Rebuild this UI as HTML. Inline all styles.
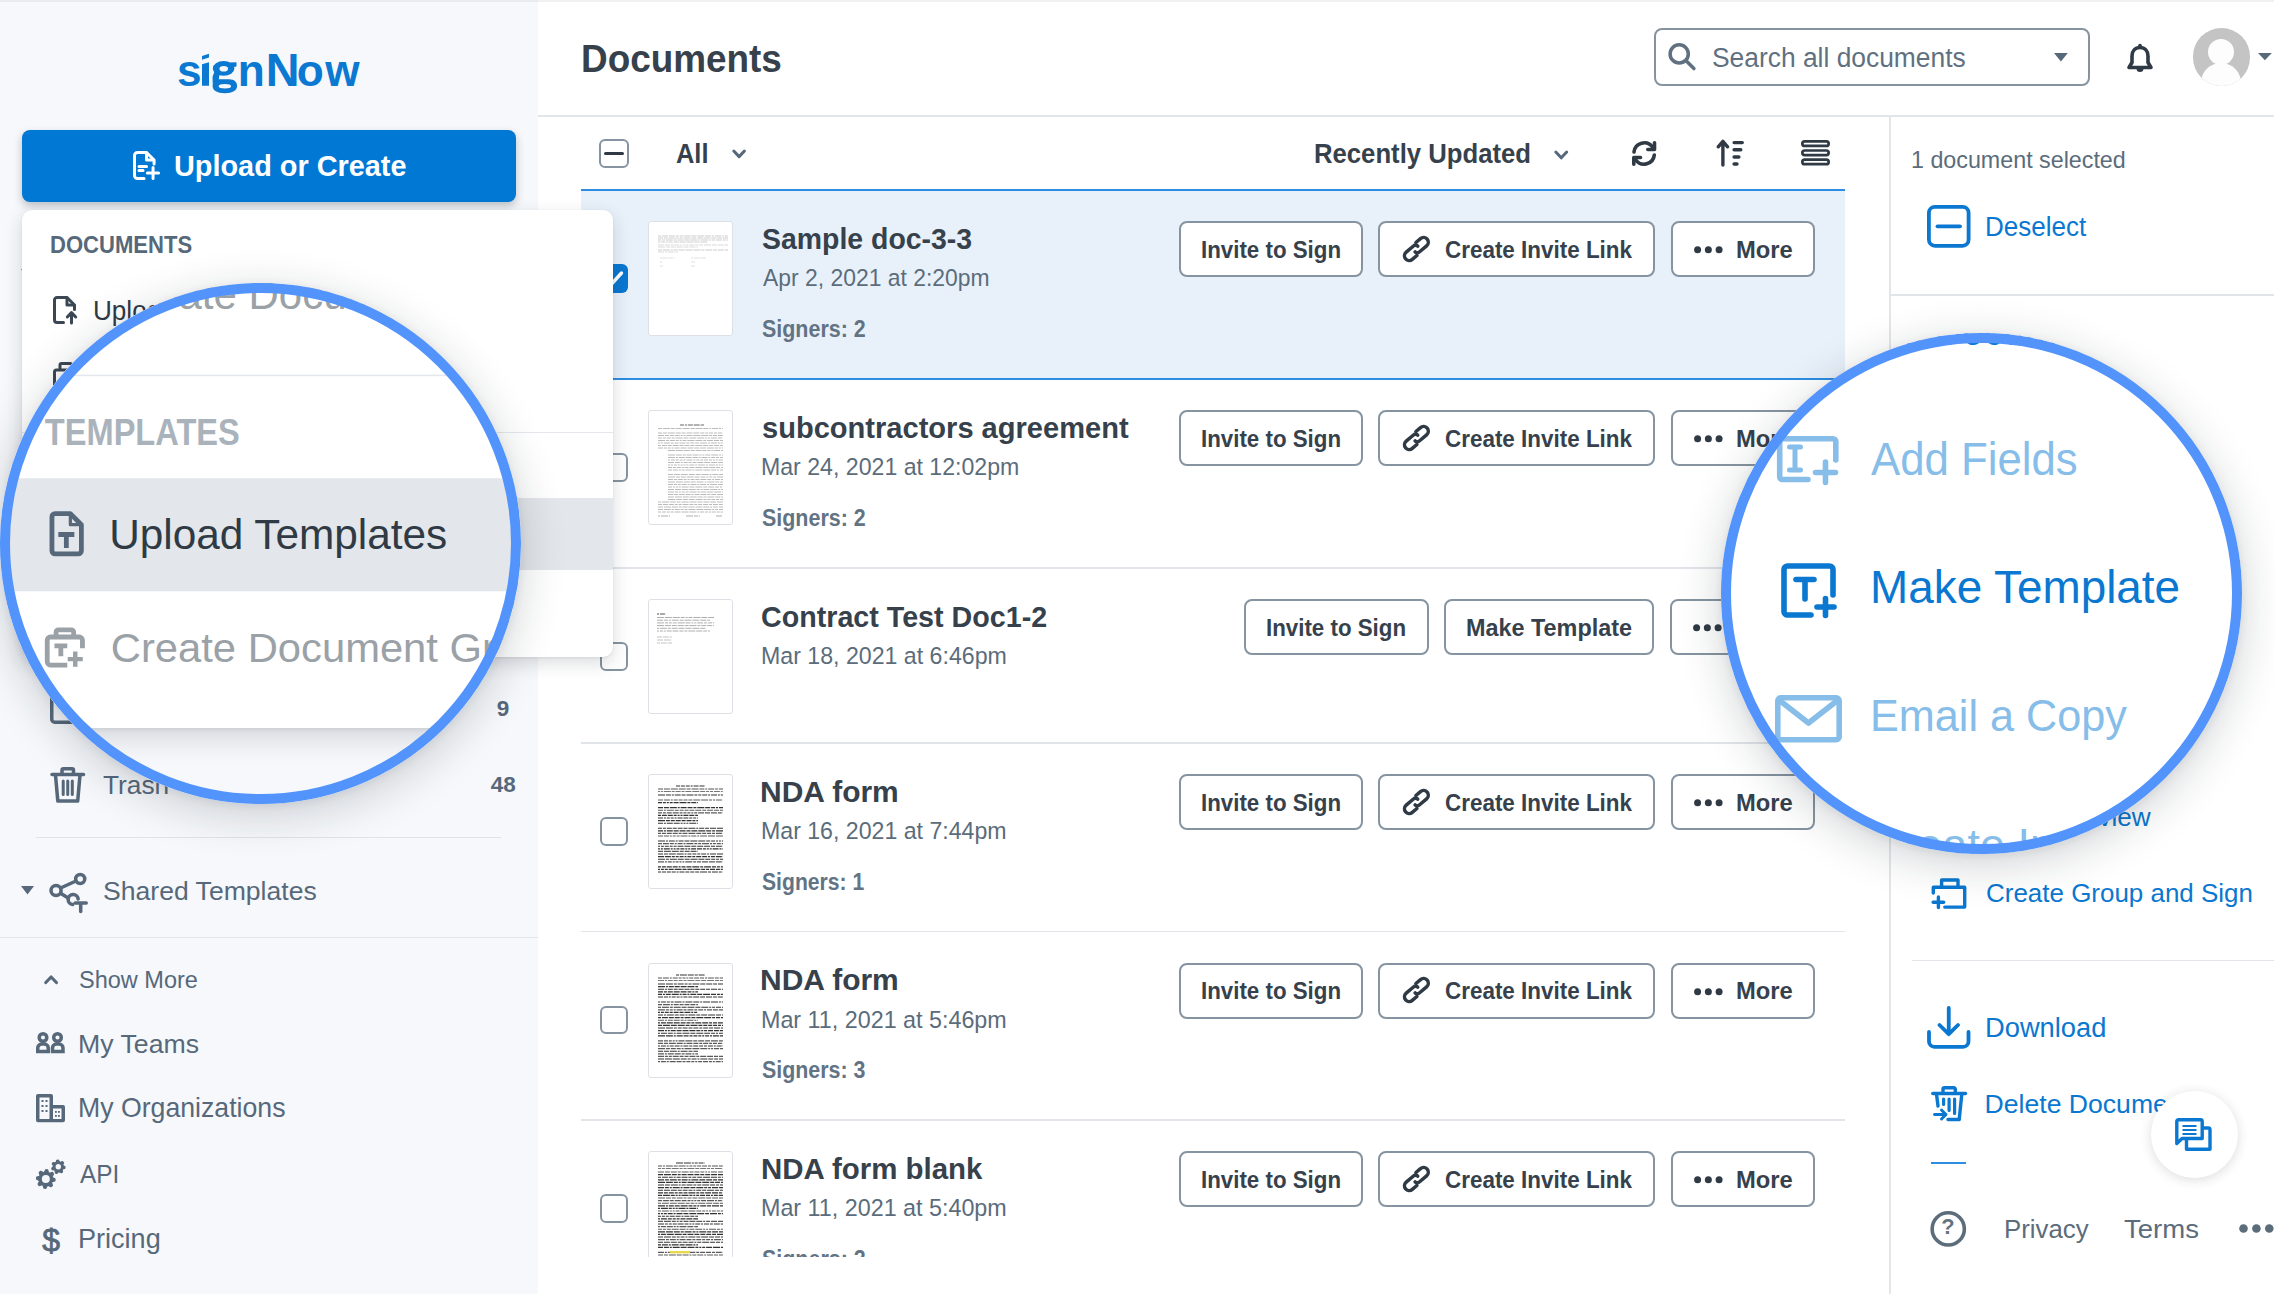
<!DOCTYPE html>
<html><head><meta charset="utf-8"><style>
html,body{margin:0;padding:0;}
body{width:2274px;height:1294px;position:relative;overflow:hidden;background:#fff;font-family:"Liberation Sans",sans-serif;}
.a{position:absolute;}
.t{position:absolute;line-height:0;white-space:nowrap;}
svg.a{display:block;}
</style></head><body>
<div class="a" style="left:0px;top:0px;width:538.00px;height:1294.00px;background:#f6f8fb;"></div><div class="a" style="left:0px;top:0px;width:538.00px;height:1.50px;background:#e9ebee;"></div><div class="a" style="left:538px;top:0px;width:1736.00px;height:1.50px;background:#f1f1f2;"></div><div class="t" style="left:176.90px;top:71.03px;font-size:44.19px;font-weight:700;color:#0b78d1;">s</div><div class="t" style="left:237.80px;top:71.03px;font-size:44.19px;font-weight:700;color:#0b78d1;">n</div><div class="t" style="left:265.80px;top:70.12px;font-size:46.80px;font-weight:700;color:#0b78d1;">N</div><div class="t" style="left:296.65px;top:71.03px;font-size:44.19px;font-weight:700;color:#0b78d1;">o</div><div class="t" style="left:325.25px;top:71.03px;font-size:44.19px;font-weight:700;color:#0b78d1;">w</div><svg class="a" style="left:195px;top:48px;width:50.00px;height:50.00px;overflow:visible;" viewBox="195 48 50 50" preserveAspectRatio="none"><g fill="#0b78d1"><path d="M202 64.2L209 62.2V85.7H202Z"/><path d="M202 56L209 53.8V57.6L202 59.8Z"/><path fill-rule="evenodd" d="M223.6 61.1A10.8 7.35 0 1 1 223.6 75.8A10.8 7.35 0 1 1 223.6 61.1ZM223.75 65.9A4.3 2.8 0 1 0 223.75 71.5A4.3 2.8 0 1 0 223.75 65.9Z"/><path d="M229.5 62.6L236.5 62.2V66.4L231 67.5Z"/><path fill-rule="evenodd" d="M212.6 86.1C212.6 81 215.5 79.2 221 79.2H229C234.5 79.2 237.1 82 237.1 86.1C237.1 90.5 232.5 93.3 224.8 93.3C217 93.3 212.6 90.5 212.6 86.1ZM218.6 86.15C218.6 87.6 221 88.4 224.9 88.4C228.8 88.4 231.1 87.6 231.1 86.15C231.1 84.7 228.8 83.9 224.9 83.9C221 83.9 218.6 84.7 218.6 86.15Z"/><path d="M214.5 71.5L219.5 74.5L218.6 80.5L216 80.8L212.6 83.5V76.5Z"/></g></svg><div class="a" style="left:22px;top:130px;width:493.50px;height:71.80px;background:#0178d3;border-radius:8px;box-shadow:0 4px 8px rgba(40,50,60,.28);"></div><svg class="a" style="left:132.5px;top:150.8px;width:27.10px;height:29.00px;overflow:visible;" viewBox="0 0 27 29" preserveAspectRatio="none"><g fill="none" stroke="#fff" stroke-width="3" stroke-linecap="round" stroke-linejoin="round"><path d="M11 27.5H4.5a3 3 0 0 1-3-3V4.5a3 3 0 0 1 3-3H13.5L21 9V13"/><path d="M13.5 1.8V9H20.5"/><path d="M6 15.5H13.5M6 19.5H10"/><path d="M20 16.5V27.5M14.3 22H25.5"/></g></svg><div class="t" style="left:173.91px;top:166.02px;font-size:29.94px;font-weight:700;color:#fff;transform:scaleX(0.9640);transform-origin:0 0;">Upload or Create</div><svg class="a" style="left:21px;top:269px;width:13.00px;height:8.50px;overflow:visible;" viewBox="0 0 13 8.5" preserveAspectRatio="none"><path d="M0 0H13L6.5 8.5Z" fill="#56687a"/></svg><svg class="a" style="left:50px;top:690px;width:35.00px;height:34.00px;overflow:visible;" viewBox="0 0 35 34" preserveAspectRatio="none"><rect x="1.75" y="1.75" width="31.5" height="30.5" rx="3" fill="none" stroke="#56687a" stroke-width="3.5"/></svg><div class="t" style="left:496.75px;top:708.71px;font-size:22.53px;font-weight:700;color:#56687a;">9</div><svg class="a" style="left:50px;top:766.75px;width:35.50px;height:35.75px;overflow:visible;" viewBox="0 0 35.5 35.75" preserveAspectRatio="none"><g fill="none" stroke="#56687a" stroke-width="3.5" stroke-linecap="round" stroke-linejoin="round"><path d="M2 7.5H33.5"/><path d="M12 7V3.2a1.5 1.5 0 0 1 1.5-1.5H22a1.5 1.5 0 0 1 1.5 1.5V7"/><path d="M5.5 8L7.8 34H27.7L30 8"/><path d="M13.2 14V27.5M17.75 14V27.5M22.3 14V27.5" stroke-width="3"/></g></svg><div class="t" style="left:103.25px;top:784.94px;font-size:26.16px;color:#56687a;transform:scaleX(1.0039);transform-origin:0 0;">Trash</div><div class="t" style="left:490.75px;top:784.96px;font-size:22.53px;font-weight:700;color:#56687a;">48</div><div class="a" style="left:36px;top:836.5px;width:465.00px;height:1.50px;background:#dfe4e8;"></div><svg class="a" style="left:21px;top:885.5px;width:13.00px;height:8.50px;overflow:visible;" viewBox="0 0 13 8.5" preserveAspectRatio="none"><path d="M0 0H13L6.5 8.5Z" fill="#56687a"/></svg><svg class="a" style="left:48.75px;top:873px;width:39.25px;height:39.00px;overflow:visible;" viewBox="0 0 39 39" preserveAspectRatio="none"><g fill="none" stroke="#56687a" stroke-width="3.5" stroke-linecap="round"><circle cx="7" cy="17.5" r="5"/><circle cx="31" cy="6" r="4.5"/><path d="M11.5 15L26.8 8"/><path d="M11.5 20.3L19 25"/><path d="M29 26a5 5 0 1 0-5.5 5.5"/><path d="M26 30H37M31.5 30V38.5"/></g></svg><div class="t" style="left:102.50px;top:891.32px;font-size:26.53px;color:#56687a;transform:scaleX(1.0024);transform-origin:0 0;">Shared Templates</div><div class="a" style="left:0px;top:936.5px;width:538.00px;height:1.50px;background:#e1e5e9;"></div><svg class="a" style="left:43.75px;top:974.75px;width:14.25px;height:9.25px;overflow:visible;" viewBox="0 0 14.25 9.25" preserveAspectRatio="none"><path d="M1.8 7.5L7.1 2L12.4 7.5" fill="none" stroke="#56687a" stroke-width="3.2" stroke-linecap="round" stroke-linejoin="round"/></svg><div class="t" style="left:79.00px;top:979.58px;font-size:23.62px;color:#56687a;transform:scaleX(0.9957);transform-origin:0 0;">Show More</div><svg class="a" style="left:36.25px;top:1032.25px;width:28.75px;height:21.25px;overflow:visible;" viewBox="0 0 28.75 21.25" preserveAspectRatio="none"><g fill="none" stroke="#56687a" stroke-width="3.5"><circle cx="7" cy="5.5" r="3.8"/><circle cx="21.5" cy="5.5" r="3.8"/><path d="M1.75 19.5V16a4 4 0 0 1 4-4h2.5a4 4 0 0 1 4 4v3.5Z"/><path d="M16.5 19.5V16a4 4 0 0 1 4-4h2.5a4 4 0 0 1 4 4v3.5Z"/></g></svg><div class="t" style="left:78.40px;top:1043.95px;font-size:25.44px;color:#56687a;transform:scaleX(1.0488);transform-origin:0 0;">My Teams</div><svg class="a" style="left:36px;top:1094px;width:29.00px;height:28.25px;overflow:visible;" viewBox="0 0 29 28.25" preserveAspectRatio="none"><g fill="#56687a"><path d="M0 2a2 2 0 0 1 2-2H15a2 2 0 0 1 2 2V11H27a2 2 0 0 1 2 2V26.25a2 2 0 0 1-2 2H2a2 2 0 0 1-2-2Z"/></g><g fill="#f6f8fb"><rect x="3.5" y="3.5" width="10" height="21.5"/><rect x="17" y="14.5" width="8.5" height="10.5"/></g><g fill="#56687a"><rect x="5.5" y="6" width="2" height="2"/><rect x="9.5" y="6" width="2" height="2"/><rect x="5.5" y="11" width="2" height="2"/><rect x="9.5" y="11" width="2" height="2"/><rect x="5.5" y="16" width="2" height="2"/><rect x="9.5" y="16" width="2" height="2"/><rect x="19" y="17" width="1.8" height="1.8"/><rect x="22" y="17" width="1.8" height="1.8"/><rect x="19" y="21" width="1.8" height="1.8"/><rect x="22" y="21" width="1.8" height="1.8"/></g></svg><div class="t" style="left:78.30px;top:1108.31px;font-size:27.25px;color:#56687a;transform:scaleX(0.9785);transform-origin:0 0;">My Organizations</div><svg class="a" style="left:36px;top:1159.75px;width:29.00px;height:28.75px;overflow:visible;" viewBox="0 0 29 28.75" preserveAspectRatio="none"><polygon points="19.00,19.00 18.82,20.79 16.09,21.61 15.46,22.78 16.31,25.51 14.91,26.65 12.41,25.29 11.13,25.68 9.80,28.20 8.01,28.02 7.19,25.29 6.02,24.66 3.29,25.51 2.15,24.11 3.51,21.61 3.12,20.33 0.60,19.00 0.78,17.21 3.51,16.39 4.14,15.22 3.29,12.49 4.69,11.35 7.19,12.71 8.47,12.32 9.80,9.80 11.59,9.98 12.41,12.71 13.58,13.34 16.31,12.49 17.45,13.89 16.09,16.39 16.48,17.67" fill="#56687a" stroke="#56687a" stroke-width="1.4" stroke-linejoin="round"/><circle cx="9.8" cy="19" r="4.0" fill="#f6f8fb"/><polygon points="28.90,6.80 28.73,8.27 26.70,8.92 26.12,9.85 26.42,11.96 25.16,12.75 23.39,11.56 22.30,11.68 20.83,13.23 19.44,12.75 19.25,10.62 18.48,9.85 16.35,9.66 15.87,8.27 17.42,6.80 17.54,5.71 16.35,3.94 17.14,2.68 19.25,2.98 20.18,2.40 20.83,0.37 22.30,0.20 23.39,2.04 24.42,2.40 26.42,1.64 27.46,2.68 26.70,4.68 27.06,5.71" fill="#56687a" stroke="#56687a" stroke-width="1.4" stroke-linejoin="round"/><circle cx="22.3" cy="6.8" r="2.7" fill="#f6f8fb"/></svg><div class="t" style="left:80.00px;top:1174.32px;font-size:26.53px;color:#56687a;transform:scaleX(0.9193);transform-origin:0 0;">API</div><div class="t" style="left:42.25px;top:1239.91px;font-size:31.98px;color:#56687a;-webkit-text-stroke:0.8px #56687a;">$</div><div class="t" style="left:77.80px;top:1239.43px;font-size:27.62px;color:#56687a;transform:scaleX(0.9800);transform-origin:0 0;">Pricing</div><div class="t" style="left:580.71px;top:58.82px;font-size:38.52px;font-weight:700;color:#36414c;transform:scaleX(0.9577);transform-origin:0 0;">Documents</div><div class="a" style="left:1654px;top:28.3px;width:435.50px;height:57.50px;background:#fff;border:2px solid #8594a0;border-radius:8px;box-sizing:border-box;"></div><svg class="a" style="left:1667.8px;top:44.8px;width:27.80px;height:25.70px;overflow:visible;" viewBox="0 0 27.8 25.7" preserveAspectRatio="none"><g fill="none" stroke="#5f7180" stroke-width="3.5" stroke-linecap="round"><circle cx="11.2" cy="8.9" r="9.1"/><path d="M17.9 15.6L25.9 23.6"/></g></svg><div class="t" style="left:1712.44px;top:56.68px;font-size:28.34px;color:#5f7180;transform:scaleX(0.9314);transform-origin:0 0;">Search all documents</div><svg class="a" style="left:2053.7px;top:53px;width:13.80px;height:8.40px;overflow:visible;" viewBox="0 0 13.8 8.4" preserveAspectRatio="none"><path d="M0 0H13.8L6.9 8.4Z" fill="#56687a"/></svg><svg class="a" style="left:2126.8px;top:43px;width:26.00px;height:29.00px;overflow:visible;" viewBox="0 0 26 29" preserveAspectRatio="none"><g fill="none" stroke="#2f3a45" stroke-width="3.6" stroke-linejoin="round"><path d="M13 4.5C8 4.5 5 8 5 13V19.5L2 24.5H24L21 19.5V13C21 8 18 4.5 13 4.5Z"/></g><path d="M9.5 25.5a3.5 3.5 0 0 0 7 0Z" fill="#2f3a45"/><circle cx="13" cy="2.6" r="1.9" fill="#2f3a45"/></svg><div class="a" style="left:2192.6px;top:28.3px;width:57.4px;height:57.4px;border-radius:50%;background:#c4c4c4;overflow:hidden"><div class="a" style="left:15.7px;top:10.5px;width:26px;height:26px;border-radius:50%;background:#fdfdfd"></div><div class="a" style="left:8.5px;top:35px;width:40px;height:40px;border-radius:50%;background:#fdfdfd"></div></div><svg class="a" style="left:2258px;top:53.3px;width:13.80px;height:7.30px;overflow:visible;" viewBox="0 0 13.8 7.3" preserveAspectRatio="none"><path d="M0 0H13.8L6.9 7.3Z" fill="#56687a"/></svg><div class="a" style="left:538px;top:115px;width:1736.00px;height:2.00px;background:#e3e6e9;"></div><div class="a" style="left:599.25px;top:139.25px;width:29.25px;height:28.50px;background:#fff;border:2px solid #8594a0;border-radius:6px;box-sizing:border-box;"></div><div class="a" style="left:604px;top:152px;width:19.50px;height:3.20px;background:#2f3a45;border-radius:2px;"></div><div class="t" style="left:676.07px;top:153.56px;font-size:27.98px;font-weight:700;color:#36414c;transform:scaleX(0.9091);transform-origin:0 0;">All</div><svg class="a" style="left:731.75px;top:149.25px;width:14.25px;height:9.75px;overflow:visible;" viewBox="0 0 14.25 9.75" preserveAspectRatio="none"><path d="M1.8 2L7.1 7.6L12.4 2" fill="none" stroke="#56687a" stroke-width="3" stroke-linecap="round" stroke-linejoin="round"/></svg><div class="t" style="left:1314.35px;top:153.81px;font-size:27.25px;font-weight:700;color:#36414c;transform:scaleX(0.9427);transform-origin:0 0;">Recently Updated</div><svg class="a" style="left:1554px;top:149.75px;width:14.50px;height:10.00px;overflow:visible;" viewBox="0 0 14.5 10" preserveAspectRatio="none"><path d="M1.8 2L7.25 7.8L12.7 2" fill="none" stroke="#56687a" stroke-width="3" stroke-linecap="round" stroke-linejoin="round"/></svg><svg class="a" style="left:1630.5px;top:141px;width:26.25px;height:25.00px;overflow:visible;" viewBox="0 0 26.25 25" preserveAspectRatio="none"><g fill="none" stroke="#2f3a45" stroke-width="3.6" stroke-linecap="round" stroke-linejoin="round"><path d="M3 11A10.3 10.3 0 0 1 21.5 6"/><path d="M23.3 14A10.3 10.3 0 0 1 4.8 19"/><path d="M23.5 1.8V8.5H16.8"/><path d="M2.8 23.2V16.5H9.5"/></g></svg><svg class="a" style="left:1715.8px;top:139px;width:28.20px;height:27.70px;overflow:visible;" viewBox="0 0 28.2 27.7" preserveAspectRatio="none"><g fill="none" stroke="#2f3a45" stroke-width="3.4" stroke-linecap="round" stroke-linejoin="round"><path d="M6.9 26V2.5M2.2 7.8L6.9 2.4L11.6 7.8"/><path d="M18.1 3.6H26.3M18.1 10.8H24.8M18.1 18H22.9M18.1 25H21"/></g></svg><svg class="a" style="left:1801px;top:140.4px;width:29.00px;height:25.80px;overflow:visible;" viewBox="0 0 29 25.8" preserveAspectRatio="none"><g fill="none" stroke="#2f3a45" stroke-width="2.7"><rect x="1.35" y="1.35" width="26.3" height="4.6" rx="2.3"/><rect x="1.35" y="10.5" width="26.3" height="4.6" rx="2.3"/><rect x="1.35" y="19.6" width="26.3" height="4.6" rx="2.3"/></g></svg><div class="a" style="left:1888.5px;top:117px;width:2.00px;height:1177.00px;background:#e3e6e9;"></div><div class="a" style="left:0;top:0;width:2274px;height:1257px;overflow:hidden"><div class="a" style="left:581px;top:189px;width:1264.00px;height:191.00px;background:#e8f1fa;"></div><div class="a" style="left:581px;top:189px;width:1264.00px;height:2.00px;background:#2d8de2;"></div><div class="a" style="left:581px;top:378px;width:1264.00px;height:2.00px;background:#2d8de2;"></div><div class="a" style="left:599.5px;top:264px;width:28.50px;height:28.50px;background:#0a77d0;border-radius:6px;"></div><svg class="a" style="left:599.5px;top:264px;width:28.50px;height:28.50px;overflow:visible;" viewBox="0 0 28.5 28.5" preserveAspectRatio="none"><path d="M7 14.5L12 19.5L21.5 9" fill="none" stroke="#fff" stroke-width="3.4" stroke-linecap="round" stroke-linejoin="round"/></svg><div class="a" style="left:647.5px;top:221px;width:85.50px;height:115.00px;background:#fff;border:1px solid #dde1e5;border-radius:3px;box-sizing:border-box;"></div><svg class="a" style="left:647.5px;top:221px;width:85.50px;height:115.00px;overflow:visible;" viewBox="0 0 85.5 115" preserveAspectRatio="none"><path d="M10 15.0H80" stroke="#8a8a8a" stroke-width="0.6" stroke-dasharray="3 0.9 6 0.9 6 0.9 3 0.9 4 0.9 6 0.9 5 0.9 7 0.9 6 0.9 2 0.9 6 0.9 2 0.9" opacity="0.7"/><path d="M10 17.0H80" stroke="#8a8a8a" stroke-width="0.6" stroke-dasharray="5 0.9 4 0.9 6 0.9 3 0.9 3 0.9 7 0.9 5 0.9 6 0.9 6 0.9 5 0.9 5 0.9 7 0.9" opacity="0.7"/><path d="M10 19.0H80" stroke="#8a8a8a" stroke-width="0.6" stroke-dasharray="3 0.9 3 0.9 7 0.9 3 0.9 6 0.9 5 0.9 7 0.9 2 0.9 7 0.9 2 0.9 3 0.9 6 0.9" opacity="0.7"/><path d="M10 21.0H60" stroke="#8a8a8a" stroke-width="0.6" stroke-dasharray="2 0.9 4 0.9 2 0.9 4 0.9 5 0.9 6 0.9 7 0.9 5 0.9 7 0.9 5 0.9 5 0.9 7 0.9" opacity="0.7"/><path d="M10 24.0H80" stroke="#999" stroke-width="0.6" stroke-dasharray="6 0.9 5 0.9 3 0.9 4 0.9 2 0.9 2 0.9 3 0.9 5 0.9 3 0.9 4 0.9 7 0.9 5 0.9" opacity="0.6"/><path d="M10 26.0H50" stroke="#999" stroke-width="0.6" stroke-dasharray="7 0.9 4 0.9 5 0.9 6 0.9 5 0.9 6 0.9 4 0.9 6 0.9 6 0.9 5 0.9 6 0.9 3 0.9" opacity="0.6"/><path d="M10 29.0H80" stroke="#888" stroke-width="0.6" stroke-dasharray="4 0.9 7 0.9 2 0.9 4 0.9 6 0.9 7 0.9 7 0.9 3 0.9 7 0.9 4 0.9 6 0.9 6 0.9" opacity="0.7"/><path d="M10 31.0H30" stroke="#999" stroke-width="0.6" stroke-dasharray="6 0.9 2 0.9 7 0.9 7 0.9 3 0.9 7 0.9 6 0.9 4 0.9 4 0.9 2 0.9 2 0.9 5 0.9" opacity="0.6"/><path d="M12 37.0H27" stroke="#aaa" stroke-width="0.6" stroke-dasharray="7 0.9 5 0.9 2 0.9 4 0.9 2 0.9 5 0.9 3 0.9 2 0.9 4 0.9 5 0.9 5 0.9 2 0.9" opacity="0.6"/><path d="M43 37.0H58" stroke="#aaa" stroke-width="0.6" stroke-dasharray="2 0.9 6 0.9 6 0.9 2 0.9 5 0.9 7 0.9 6 0.9 4 0.9 6 0.9 4 0.9 6 0.9 3 0.9" opacity="0.6"/><path d="M12 41.0H15" stroke="#aaa" stroke-width="0.6" stroke-dasharray="2 0.9 4 0.9 2 0.9 2 0.9 2 0.9 6 0.9 6 0.9 2 0.9 3 0.9 5 0.9 4 0.9 6 0.9" opacity="0.6"/><path d="M43 41.0H47" stroke="#aaa" stroke-width="0.6" stroke-dasharray="4 0.9 3 0.9 7 0.9 2 0.9 4 0.9 4 0.9 4 0.9 3 0.9 5 0.9 5 0.9 5 0.9 6 0.9" opacity="0.6"/><path d="M12 45.0H15" stroke="#aaa" stroke-width="0.6" stroke-dasharray="5 0.9 7 0.9 6 0.9 7 0.9 6 0.9 2 0.9 6 0.9 6 0.9 4 0.9 5 0.9 7 0.9 7 0.9" opacity="0.6"/><path d="M43 45.0H47" stroke="#aaa" stroke-width="0.6" stroke-dasharray="7 0.9 3 0.9 4 0.9 5 0.9 4 0.9 6 0.9 4 0.9 6 0.9 4 0.9 2 0.9 5 0.9 6 0.9" opacity="0.6"/></svg><div class="t" style="left:761.78px;top:238.67px;font-size:29.80px;font-weight:700;color:#36414c;transform:scaleX(0.9541);transform-origin:0 0;">Sample doc-3-3</div><div class="t" style="left:762.50px;top:278.15px;font-size:24.71px;color:#5b6c7b;transform:scaleX(0.9270);transform-origin:0 0;">Apr 2, 2021 at 2:20pm</div><div class="t" style="left:761.84px;top:328.58px;font-size:24.35px;font-weight:700;color:#627384;transform:scaleX(0.8810);transform-origin:0 0;">Signers: 2</div><div class="a" style="left:1178.5px;top:221px;width:184.50px;height:56.25px;background:#fff;border:2px solid #8594a0;border-radius:8px;box-sizing:border-box;"></div><div class="t" style="left:1200.88px;top:249.83px;font-size:24.35px;font-weight:700;color:#36414c;transform:scaleX(0.9162);transform-origin:0 0;">Invite to Sign</div><div class="a" style="left:1378px;top:221px;width:276.75px;height:56.25px;background:#fff;border:2px solid #8594a0;border-radius:8px;box-sizing:border-box;"></div><svg class="a" style="left:1401.5px;top:235.5px;width:28.75px;height:26.75px;overflow:visible;" viewBox="0 0 28.75 26.75" preserveAspectRatio="none"><g fill="none" stroke="#2f3a45" stroke-width="3.5" stroke-linecap="round"><g transform="translate(14.4 13) rotate(-40)"><path d="M3.8 -5.3H9.8A4.75 4.75 0 0 1 9.8 4.2H0.3Q-2.8 4.2 -2.8 1.3"/><path d="M-3.8 5.3H-9.8A4.75 4.75 0 0 1 -9.8 -4.2H-0.3Q2.8 -4.2 2.8 -1.3"/></g></g></svg><div class="t" style="left:1444.58px;top:249.83px;font-size:24.35px;font-weight:700;color:#36414c;transform:scaleX(0.9217);transform-origin:0 0;">Create Invite Link</div><div class="a" style="left:1671px;top:221px;width:144.00px;height:56.25px;background:#fff;border:2px solid #8594a0;border-radius:8px;box-sizing:border-box;"></div><svg class="a" style="left:1693.5px;top:246px;width:28.70px;height:7.50px;overflow:visible;" viewBox="0 0 28.7 7.5" preserveAspectRatio="none"><g fill="#2f3a45"><circle cx="3.6" cy="3.7" r="3.5"/><circle cx="14.35" cy="3.7" r="3.5"/><circle cx="25.1" cy="3.7" r="3.5"/></g></svg><div class="t" style="left:1735.84px;top:249.83px;font-size:24.35px;font-weight:700;color:#36414c;transform:scaleX(0.9758);transform-origin:0 0;">More</div><div class="a" style="left:581px;top:567.25px;width:1264.00px;height:1.50px;background:#e1e5e9;"></div><div class="a" style="left:599.5px;top:453px;width:28.50px;height:28.50px;background:#fff;border:2px solid #8594a0;border-radius:6px;box-sizing:border-box;"></div><div class="a" style="left:647.5px;top:410px;width:85.50px;height:115.00px;background:#fff;border:1px solid #dde1e5;border-radius:3px;box-sizing:border-box;"></div><svg class="a" style="left:647.5px;top:410px;width:85.50px;height:115.00px;overflow:visible;" viewBox="0 0 85.5 115" preserveAspectRatio="none"><path d="M32 15.0H56" stroke="#666" stroke-width="1.0" stroke-dasharray="4 0.9 2 0.9 5 0.9 6 0.9 6 0.9 7 0.9 3 0.9 2 0.9 7 0.9 7 0.9 4 0.9 5 0.9" opacity="1.0"/><path d="M10 18.5H75" stroke="#8d8d8d" stroke-width="0.75" stroke-dasharray="4 0.9 7 0.9 4 0.9 6 0.9 7 0.9 4 0.9 7 0.9 5 0.9 2 0.9 6 0.9 2 0.9 7 0.9" opacity="0.8"/><path d="M10 23.0H75" stroke="#8d8d8d" stroke-width="0.75" stroke-dasharray="4 0.9 4 0.9 7 0.9 5 0.9 4 0.9 6 0.9 6 0.9 4 0.9 3 0.9 4 0.9 3 0.9 4 0.9" opacity="0.8"/><path d="M10 25.5H75" stroke="#8d8d8d" stroke-width="0.75" stroke-dasharray="6 0.9 4 0.9 4 0.9 5 0.9 2 0.9 2 0.9 6 0.9 7 0.9 7 0.9 3 0.9 4 0.9 6 0.9" opacity="0.8"/><path d="M10 28.0H75" stroke="#8d8d8d" stroke-width="0.75" stroke-dasharray="4 0.9 3 0.9 4 0.9 3 0.9 7 0.9 5 0.9 7 0.9 7 0.9 2 0.9 2 0.9 6 0.9 4 0.9" opacity="0.8"/><path d="M10 30.5H75" stroke="#8d8d8d" stroke-width="0.75" stroke-dasharray="7 0.9 3 0.9 5 0.9 3 0.9 2 0.9 4 0.9 7 0.9 7 0.9 3 0.9 6 0.9 5 0.9 4 0.9" opacity="0.8"/><path d="M10 33.0H75" stroke="#8d8d8d" stroke-width="0.75" stroke-dasharray="2 0.9 2 0.9 6 0.9 3 0.9 4 0.9 6 0.9 3 0.9 4 0.9 4 0.9 7 0.9 2 0.9 6 0.9" opacity="0.8"/><path d="M10 35.5H75" stroke="#8d8d8d" stroke-width="0.75" stroke-dasharray="3 0.9 5 0.9 4 0.9 6 0.9 4 0.9 5 0.9 4 0.9 7 0.9 5 0.9 4 0.9 5 0.9 6 0.9" opacity="0.8"/><path d="M10 38.0H75" stroke="#8d8d8d" stroke-width="0.75" stroke-dasharray="5 0.9 3 0.9 3 0.9 2 0.9 5 0.9 6 0.9 6 0.9 5 0.9 6 0.9 7 0.9 3 0.9 2 0.9" opacity="0.8"/><path d="M20 40.5H75" stroke="#8d8d8d" stroke-width="0.75" stroke-dasharray="7 0.9 7 0.9 6 0.9 4 0.9 6 0.9 4 0.9 3 0.9 2 0.9 6 0.9 4 0.9 2 0.9 3 0.9" opacity="0.8"/><path d="M20 45.0H75" stroke="#8d8d8d" stroke-width="0.75" stroke-dasharray="7 0.9 6 0.9 3 0.9 5 0.9 6 0.9 2 0.9 2 0.9 5 0.9 7 0.9 2 0.9 3 0.9 6 0.9" opacity="0.8"/><path d="M20 47.5H75" stroke="#8d8d8d" stroke-width="0.75" stroke-dasharray="7 0.9 2 0.9 6 0.9 6 0.9 5 0.9 2 0.9 6 0.9 2 0.9 4 0.9 3 0.9 4 0.9 6 0.9" opacity="0.8"/><path d="M20 50.0H75" stroke="#8d8d8d" stroke-width="0.75" stroke-dasharray="2 0.9 4 0.9 3 0.9 3 0.9 2 0.9 6 0.9 2 0.9 3 0.9 3 0.9 4 0.9 3 0.9 2 0.9" opacity="0.8"/><path d="M20 52.5H75" stroke="#8d8d8d" stroke-width="0.75" stroke-dasharray="6 0.9 5 0.9 2 0.9 4 0.9 3 0.9 4 0.9 6 0.9 6 0.9 6 0.9 5 0.9 2 0.9 5 0.9" opacity="0.8"/><path d="M20 55.0H75" stroke="#8d8d8d" stroke-width="0.75" stroke-dasharray="2 0.9 2 0.9 3 0.9 2 0.9 2 0.9 2 0.9 2 0.9 5 0.9 2 0.9 7 0.9 2 0.9 6 0.9" opacity="0.8"/><path d="M20 57.5H75" stroke="#8d8d8d" stroke-width="0.75" stroke-dasharray="4 0.9 3 0.9 4 0.9 2 0.9 4 0.9 5 0.9 7 0.9 5 0.9 6 0.9 4 0.9 4 0.9 4 0.9" opacity="0.8"/><path d="M20 60.0H75" stroke="#8d8d8d" stroke-width="0.75" stroke-dasharray="4 0.9 5 0.9 2 0.9 3 0.9 6 0.9 2 0.9 7 0.9 7 0.9 5 0.9 2 0.9 6 0.9 3 0.9" opacity="0.8"/><path d="M20 64.5H75" stroke="#8d8d8d" stroke-width="0.75" stroke-dasharray="5 0.9 6 0.9 7 0.9 6 0.9 5 0.9 7 0.9 2 0.9 6 0.9 5 0.9 2 0.9 4 0.9 7 0.9" opacity="0.8"/><path d="M20 67.0H75" stroke="#8d8d8d" stroke-width="0.75" stroke-dasharray="7 0.9 4 0.9 5 0.9 7 0.9 5 0.9 5 0.9 2 0.9 3 0.9 3 0.9 6 0.9 4 0.9 7 0.9" opacity="0.8"/><path d="M20 69.5H75" stroke="#8d8d8d" stroke-width="0.75" stroke-dasharray="5 0.9 3 0.9 5 0.9 3 0.9 2 0.9 4 0.9 4 0.9 6 0.9 4 0.9 2 0.9 5 0.9 7 0.9" opacity="0.8"/><path d="M20 72.0H75" stroke="#8d8d8d" stroke-width="0.75" stroke-dasharray="7 0.9 7 0.9 6 0.9 5 0.9 7 0.9 2 0.9 7 0.9 4 0.9 6 0.9 6 0.9 2 0.9 6 0.9" opacity="0.8"/><path d="M20 74.5H75" stroke="#8d8d8d" stroke-width="0.75" stroke-dasharray="5 0.9 3 0.9 3 0.9 5 0.9 2 0.9 6 0.9 2 0.9 6 0.9 2 0.9 7 0.9 5 0.9 3 0.9" opacity="0.8"/><path d="M20 77.0H75" stroke="#8d8d8d" stroke-width="0.75" stroke-dasharray="4 0.9 2 0.9 2 0.9 2 0.9 7 0.9 5 0.9 7 0.9 4 0.9 6 0.9 4 0.9 2 0.9 2 0.9" opacity="0.8"/><path d="M20 79.5H75" stroke="#8d8d8d" stroke-width="0.75" stroke-dasharray="6 0.9 6 0.9 6 0.9 7 0.9 3 0.9 2 0.9 6 0.9 7 0.9 2 0.9 6 0.9 2 0.9 6 0.9" opacity="0.8"/><path d="M20 82.0H75" stroke="#8d8d8d" stroke-width="0.75" stroke-dasharray="6 0.9 3 0.9 2 0.9 3 0.9 3 0.9 7 0.9 3 0.9 5 0.9 6 0.9 7 0.9 5 0.9 4 0.9" opacity="0.8"/><path d="M20 84.5H75" stroke="#8d8d8d" stroke-width="0.75" stroke-dasharray="5 0.9 4 0.9 6 0.9 5 0.9 2 0.9 5 0.9 6 0.9 3 0.9 5 0.9 7 0.9 3 0.9 5 0.9" opacity="0.8"/><path d="M20 87.0H75" stroke="#8d8d8d" stroke-width="0.75" stroke-dasharray="6 0.9 7 0.9 6 0.9 7 0.9 5 0.9 3 0.9 7 0.9 5 0.9 3 0.9 3 0.9 2 0.9 5 0.9" opacity="0.8"/><path d="M20 89.5H75" stroke="#8d8d8d" stroke-width="0.75" stroke-dasharray="7 0.9 6 0.9 5 0.9 6 0.9 7 0.9 3 0.9 3 0.9 4 0.9 3 0.9 3 0.9 6 0.9 6 0.9" opacity="0.8"/><path d="M10 92.0H75" stroke="#8d8d8d" stroke-width="0.75" stroke-dasharray="3 0.9 7 0.9 6 0.9 4 0.9 7 0.9 7 0.9 5 0.9 6 0.9 6 0.9 6 0.9 4 0.9 3 0.9" opacity="0.8"/><path d="M10 94.5H75" stroke="#8d8d8d" stroke-width="0.75" stroke-dasharray="4 0.9 5 0.9 5 0.9 3 0.9 3 0.9 6 0.9 4 0.9 3 0.9 4 0.9 5 0.9 3 0.9 5 0.9" opacity="0.8"/><path d="M10 97.0H75" stroke="#8d8d8d" stroke-width="0.75" stroke-dasharray="5 0.9 7 0.9 6 0.9 3 0.9 5 0.9 6 0.9 7 0.9 6 0.9 2 0.9 5 0.9 7 0.9 2 0.9" opacity="0.8"/><path d="M10 99.5H75" stroke="#8d8d8d" stroke-width="0.75" stroke-dasharray="5 0.9 7 0.9 2 0.9 5 0.9 3 0.9 3 0.9 7 0.9 7 0.9 7 0.9 2 0.9 3 0.9 4 0.9" opacity="0.8"/><path d="M10 102.0H75" stroke="#8d8d8d" stroke-width="0.75" stroke-dasharray="3 0.9 4 0.9 3 0.9 3 0.9 6 0.9 7 0.9 7 0.9 2 0.9 4 0.9 3 0.9 2 0.9 4 0.9" opacity="0.8"/><path d="M10 106.0H22" stroke="#999" stroke-width="0.8" stroke-dasharray="2 0.9 7 0.9 2 0.9 2 0.9 2 0.9 4 0.9 4 0.9 2 0.9 4 0.9 5 0.9 6 0.9 7 0.9" opacity="1.0"/><path d="M38 106.0H52" stroke="#999" stroke-width="0.8" stroke-dasharray="7 0.9 4 0.9 2 0.9 2 0.9 4 0.9 4 0.9 5 0.9 5 0.9 5 0.9 2 0.9 3 0.9 7 0.9" opacity="1.0"/><path d="M68 106.0H74" stroke="#999" stroke-width="0.8" stroke-dasharray="6 0.9 7 0.9 5 0.9 5 0.9 3 0.9 6 0.9 4 0.9 2 0.9 4 0.9 2 0.9 7 0.9 5 0.9" opacity="1.0"/></svg><div class="t" style="left:761.52px;top:427.67px;font-size:29.80px;font-weight:700;color:#36414c;transform:scaleX(0.9753);transform-origin:0 0;">subcontractors agreement</div><div class="t" style="left:760.63px;top:467.15px;font-size:24.71px;color:#5b6c7b;transform:scaleX(0.9359);transform-origin:0 0;">Mar 24, 2021 at 12:02pm</div><div class="t" style="left:761.84px;top:517.58px;font-size:24.35px;font-weight:700;color:#627384;transform:scaleX(0.8810);transform-origin:0 0;">Signers: 2</div><div class="a" style="left:1178.5px;top:410px;width:184.50px;height:56.25px;background:#fff;border:2px solid #8594a0;border-radius:8px;box-sizing:border-box;"></div><div class="t" style="left:1200.88px;top:438.83px;font-size:24.35px;font-weight:700;color:#36414c;transform:scaleX(0.9162);transform-origin:0 0;">Invite to Sign</div><div class="a" style="left:1378px;top:410px;width:276.75px;height:56.25px;background:#fff;border:2px solid #8594a0;border-radius:8px;box-sizing:border-box;"></div><svg class="a" style="left:1401.5px;top:424.5px;width:28.75px;height:26.75px;overflow:visible;" viewBox="0 0 28.75 26.75" preserveAspectRatio="none"><g fill="none" stroke="#2f3a45" stroke-width="3.5" stroke-linecap="round"><g transform="translate(14.4 13) rotate(-40)"><path d="M3.8 -5.3H9.8A4.75 4.75 0 0 1 9.8 4.2H0.3Q-2.8 4.2 -2.8 1.3"/><path d="M-3.8 5.3H-9.8A4.75 4.75 0 0 1 -9.8 -4.2H-0.3Q2.8 -4.2 2.8 -1.3"/></g></g></svg><div class="t" style="left:1444.58px;top:438.83px;font-size:24.35px;font-weight:700;color:#36414c;transform:scaleX(0.9217);transform-origin:0 0;">Create Invite Link</div><div class="a" style="left:1671px;top:410px;width:144.00px;height:56.25px;background:#fff;border:2px solid #8594a0;border-radius:8px;box-sizing:border-box;"></div><svg class="a" style="left:1693.5px;top:435px;width:28.70px;height:7.50px;overflow:visible;" viewBox="0 0 28.7 7.5" preserveAspectRatio="none"><g fill="#2f3a45"><circle cx="3.6" cy="3.7" r="3.5"/><circle cx="14.35" cy="3.7" r="3.5"/><circle cx="25.1" cy="3.7" r="3.5"/></g></svg><div class="t" style="left:1735.84px;top:438.83px;font-size:24.35px;font-weight:700;color:#36414c;transform:scaleX(0.9758);transform-origin:0 0;">More</div><div class="a" style="left:581px;top:742.25px;width:1264.00px;height:1.50px;background:#e1e5e9;"></div><div class="a" style="left:599.5px;top:642px;width:28.50px;height:28.50px;background:#fff;border:2px solid #8594a0;border-radius:6px;box-sizing:border-box;"></div><div class="a" style="left:647.5px;top:599px;width:85.50px;height:115.00px;background:#fff;border:1px solid #dde1e5;border-radius:3px;box-sizing:border-box;"></div><svg class="a" style="left:647.5px;top:599px;width:85.50px;height:115.00px;overflow:visible;" viewBox="0 0 85.5 115" preserveAspectRatio="none"><path d="M9 15.0H18" stroke="#555" stroke-width="1.1" stroke-dasharray="2 0.9 5 0.9 6 0.9 4 0.9 2 0.9 6 0.9 7 0.9 4 0.9 7 0.9 4 0.9 5 0.9 4 0.9" opacity="1.0"/><path d="M9 18.5H66" stroke="#999" stroke-width="0.8" stroke-dasharray="7 0.9 7 0.9 7 0.9 4 0.9 2 0.9 4 0.9 7 0.9 6 0.9 6 0.9 6 0.9 2 0.9 7 0.9" opacity="1.0"/><path d="M9 21.2H62" stroke="#999" stroke-width="0.8" stroke-dasharray="6 0.9 4 0.9 2 0.9 7 0.9 4 0.9 7 0.9 7 0.9 6 0.9 7 0.9 3 0.9 7 0.9 7 0.9" opacity="1.0"/><path d="M9 23.9H66" stroke="#999" stroke-width="0.8" stroke-dasharray="7 0.9 3 0.9 3 0.9 4 0.9 7 0.9 5 0.9 2 0.9 2 0.9 6 0.9 3 0.9 4 0.9 7 0.9" opacity="1.0"/><path d="M9 26.6H66" stroke="#999" stroke-width="0.8" stroke-dasharray="7 0.9 6 0.9 5 0.9 6 0.9 4 0.9 7 0.9 3 0.9 5 0.9 5 0.9 4 0.9 3 0.9 7 0.9" opacity="1.0"/><path d="M9 29.3H58" stroke="#999" stroke-width="0.8" stroke-dasharray="2 0.9 7 0.9 3 0.9 6 0.9 6 0.9 6 0.9 7 0.9 5 0.9 4 0.9 2 0.9 4 0.9 4 0.9" opacity="1.0"/><path d="M9 32.0H62" stroke="#999" stroke-width="0.8" stroke-dasharray="2 0.9 3 0.9 2 0.9 5 0.9 6 0.9 4 0.9 3 0.9 7 0.9 6 0.9 4 0.9 4 0.9 5 0.9" opacity="1.0"/><path d="M9 38.0H24" stroke="#aaa" stroke-width="0.7" stroke-dasharray="5 0.9 6 0.9 2 0.9 4 0.9 5 0.9 2 0.9 3 0.9 4 0.9 6 0.9 2 0.9 7 0.9 2 0.9" opacity="1.0"/><path d="M9 41.0H24" stroke="#aaa" stroke-width="0.7" stroke-dasharray="6 0.9 7 0.9 2 0.9 3 0.9 7 0.9 3 0.9 6 0.9 5 0.9 7 0.9 7 0.9 5 0.9 7 0.9" opacity="1.0"/><path d="M9 44.0H24" stroke="#aaa" stroke-width="0.7" stroke-dasharray="3 0.9 6 0.9 6 0.9 3 0.9 5 0.9 3 0.9 6 0.9 6 0.9 3 0.9 6 0.9 3 0.9 3 0.9" opacity="1.0"/></svg><div class="t" style="left:761.30px;top:616.67px;font-size:29.80px;font-weight:700;color:#36414c;transform:scaleX(0.9618);transform-origin:0 0;">Contract Test Doc1-2</div><div class="t" style="left:760.63px;top:656.15px;font-size:24.71px;color:#5b6c7b;transform:scaleX(0.9373);transform-origin:0 0;">Mar 18, 2021 at 6:46pm</div><div class="a" style="left:1244px;top:599px;width:184.50px;height:56.25px;background:#fff;border:2px solid #8594a0;border-radius:8px;box-sizing:border-box;"></div><div class="t" style="left:1266.38px;top:627.83px;font-size:24.35px;font-weight:700;color:#36414c;transform:scaleX(0.9162);transform-origin:0 0;">Invite to Sign</div><div class="a" style="left:1443.8px;top:599px;width:210.20px;height:56.25px;background:#fff;border:2px solid #8594a0;border-radius:8px;box-sizing:border-box;"></div><div class="t" style="left:1465.86px;top:627.83px;font-size:24.35px;font-weight:700;color:#36414c;transform:scaleX(0.9614);transform-origin:0 0;">Make Template</div><div class="a" style="left:1670px;top:599px;width:145.00px;height:56.25px;background:#fff;border:2px solid #8594a0;border-radius:8px;box-sizing:border-box;"></div><svg class="a" style="left:1692.5px;top:624px;width:28.70px;height:7.50px;overflow:visible;" viewBox="0 0 28.7 7.5" preserveAspectRatio="none"><g fill="#2f3a45"><circle cx="3.6" cy="3.7" r="3.5"/><circle cx="14.35" cy="3.7" r="3.5"/><circle cx="25.1" cy="3.7" r="3.5"/></g></svg><div class="t" style="left:1735.84px;top:627.83px;font-size:24.35px;font-weight:700;color:#36414c;transform:scaleX(0.9758);transform-origin:0 0;">More</div><div class="a" style="left:581px;top:930.75px;width:1264.00px;height:1.50px;background:#e1e5e9;"></div><div class="a" style="left:599.5px;top:817px;width:28.50px;height:28.50px;background:#fff;border:2px solid #8594a0;border-radius:6px;box-sizing:border-box;"></div><div class="a" style="left:647.5px;top:774px;width:85.50px;height:115.00px;background:#fff;border:1px solid #dde1e5;border-radius:3px;box-sizing:border-box;"></div><svg class="a" style="left:647.5px;top:774px;width:85.50px;height:115.00px;overflow:visible;" viewBox="0 0 85.5 115" preserveAspectRatio="none"><path d="M28 12.0H57" stroke="#333" stroke-width="1.0" stroke-dasharray="4 0.9 4 0.9 4 0.9 2 0.9 5 0.9 5 0.9 5 0.9 4 0.9 6 0.9 6 0.9 4 0.9 7 0.9" opacity="1.0"/><path d="M10 15.0H75" stroke="#555" stroke-width="1.0" stroke-dasharray="5 0.9 6 0.9 7 0.9 7 0.9 4 0.9 7 0.9 5 0.9 2 0.9 6 0.9 3 0.9 7 0.9 7 0.9" opacity="1.0"/><path d="M10 17.5H75" stroke="#666" stroke-width="0.9" stroke-dasharray="2 0.9 2 0.9 7 0.9 3 0.9 5 0.9 3 0.9 6 0.9 7 0.9 5 0.9 3 0.9 3 0.9 6 0.9" opacity="1.0"/><path d="M10 21.0H75" stroke="#333" stroke-width="1.15" stroke-dasharray="7 0.9 5 0.9 2 0.9 6 0.9 4 0.9 7 0.9 3 0.9 3 0.9 5 0.9 2 0.9 6 0.9 2 0.9" opacity="1.0"/><path d="M10 26.0H75" stroke="#5a5a5a" stroke-width="1.15" stroke-dasharray="5 0.9 6 0.9 2 0.9 4 0.9 4 0.9 4 0.9 4 0.9 7 0.9 7 0.9 3 0.9 2 0.9 6 0.9" opacity="1.0"/><path d="M10 28.6H50" stroke="#333" stroke-width="1.15" stroke-dasharray="4 0.9 3 0.9 2 0.9 3 0.9 5 0.9 7 0.9 3 0.9 5 0.9 4 0.9 2 0.9 2 0.9 5 0.9" opacity="1.0"/><path d="M10 33.6H75" stroke="#333" stroke-width="1.15" stroke-dasharray="5 0.9 5 0.9 7 0.9 2 0.9 6 0.9 5 0.9 3 0.9 7 0.9 5 0.9 4 0.9 2 0.9 5 0.9" opacity="1.0"/><path d="M10 36.2H75" stroke="#5a5a5a" stroke-width="1.15" stroke-dasharray="5 0.9 2 0.9 7 0.9 4 0.9 4 0.9 4 0.9 5 0.9 6 0.9 4 0.9 6 0.9 5 0.9 3 0.9" opacity="1.0"/><path d="M10 38.8H75" stroke="#5a5a5a" stroke-width="1.15" stroke-dasharray="4 0.9 3 0.9 5 0.9 6 0.9 3 0.9 3 0.9 3 0.9 2 0.9 3 0.9 6 0.9 5 0.9 6 0.9" opacity="1.0"/><path d="M10 41.4H50" stroke="#333" stroke-width="1.15" stroke-dasharray="3 0.9 5 0.9 5 0.9 3 0.9 2 0.9 2 0.9 5 0.9 5 0.9 4 0.9 5 0.9 2 0.9 7 0.9" opacity="1.0"/><path d="M10 44.0H50" stroke="#333" stroke-width="1.15" stroke-dasharray="5 0.9 2 0.9 3 0.9 3 0.9 2 0.9 5 0.9 5 0.9 3 0.9 3 0.9 4 0.9 6 0.9 2 0.9" opacity="1.0"/><path d="M10 46.6H50" stroke="#333" stroke-width="1.15" stroke-dasharray="7 0.9 4 0.9 4 0.9 5 0.9 4 0.9 5 0.9 3 0.9 6 0.9 4 0.9 2 0.9 4 0.9 7 0.9" opacity="1.0"/><path d="M10 49.2H50" stroke="#333" stroke-width="1.15" stroke-dasharray="5 0.9 2 0.9 6 0.9 6 0.9 2 0.9 2 0.9 2 0.9 7 0.9 2 0.9 2 0.9 3 0.9 6 0.9" opacity="1.0"/><path d="M10 54.2H75" stroke="#333" stroke-width="1.15" stroke-dasharray="4 0.9 3 0.9 5 0.9 4 0.9 5 0.9 4 0.9 7 0.9 2 0.9 5 0.9 4 0.9 6 0.9 7 0.9" opacity="1.0"/><path d="M10 56.8H75" stroke="#333" stroke-width="1.15" stroke-dasharray="5 0.9 2 0.9 6 0.9 5 0.9 6 0.9 4 0.9 6 0.9 7 0.9 5 0.9 3 0.9 7 0.9 7 0.9" opacity="1.0"/><path d="M10 59.4H75" stroke="#5a5a5a" stroke-width="1.15" stroke-dasharray="3 0.9 4 0.9 5 0.9 5 0.9 3 0.9 5 0.9 7 0.9 5 0.9 4 0.9 4 0.9 3 0.9 6 0.9" opacity="1.0"/><path d="M10 62.0H75" stroke="#5a5a5a" stroke-width="1.15" stroke-dasharray="5 0.9 5 0.9 2 0.9 3 0.9 3 0.9 7 0.9 2 0.9 5 0.9 2 0.9 7 0.9 7 0.9 7 0.9" opacity="1.0"/><path d="M10 67.0H75" stroke="#333" stroke-width="1.15" stroke-dasharray="7 0.9 2 0.9 6 0.9 2 0.9 5 0.9 5 0.9 7 0.9 7 0.9 4 0.9 4 0.9 2 0.9 2 0.9" opacity="1.0"/><path d="M10 69.6H75" stroke="#5a5a5a" stroke-width="1.15" stroke-dasharray="4 0.9 6 0.9 4 0.9 2 0.9 5 0.9 2 0.9 7 0.9 3 0.9 3 0.9 7 0.9 2 0.9 3 0.9" opacity="1.0"/><path d="M10 72.2H75" stroke="#333" stroke-width="1.15" stroke-dasharray="2 0.9 3 0.9 4 0.9 3 0.9 3 0.9 6 0.9 6 0.9 5 0.9 6 0.9 6 0.9 4 0.9 6 0.9" opacity="1.0"/><path d="M10 74.8H75" stroke="#333" stroke-width="1.15" stroke-dasharray="2 0.9 2 0.9 6 0.9 2 0.9 2 0.9 3 0.9 4 0.9 2 0.9 2 0.9 5 0.9 5 0.9 3 0.9" opacity="1.0"/><path d="M10 77.4H50" stroke="#5a5a5a" stroke-width="1.15" stroke-dasharray="5 0.9 7 0.9 7 0.9 4 0.9 5 0.9 6 0.9 7 0.9 5 0.9 2 0.9 4 0.9 6 0.9 5 0.9" opacity="1.0"/><path d="M10 80.0H75" stroke="#333" stroke-width="1.15" stroke-dasharray="5 0.9 4 0.9 7 0.9 7 0.9 2 0.9 4 0.9 4 0.9 3 0.9 5 0.9 2 0.9 6 0.9 7 0.9" opacity="1.0"/><path d="M10 82.6H75" stroke="#333" stroke-width="1.15" stroke-dasharray="6 0.9 6 0.9 3 0.9 3 0.9 4 0.9 2 0.9 4 0.9 3 0.9 5 0.9 5 0.9 2 0.9 4 0.9" opacity="1.0"/><path d="M10 85.2H75" stroke="#333" stroke-width="1.15" stroke-dasharray="7 0.9 3 0.9 7 0.9 6 0.9 5 0.9 7 0.9 6 0.9 5 0.9 4 0.9 3 0.9 6 0.9 5 0.9" opacity="1.0"/><path d="M10 87.8H75" stroke="#5a5a5a" stroke-width="1.15" stroke-dasharray="6 0.9 2 0.9 4 0.9 2 0.9 3 0.9 2 0.9 2 0.9 7 0.9 3 0.9 4 0.9 6 0.9 6 0.9" opacity="1.0"/><path d="M10 92.8H75" stroke="#333" stroke-width="1.15" stroke-dasharray="3 0.9 4 0.9 5 0.9 5 0.9 2 0.9 4 0.9 5 0.9 7 0.9 3 0.9 7 0.9 4 0.9 3 0.9" opacity="1.0"/><path d="M10 95.4H75" stroke="#333" stroke-width="1.15" stroke-dasharray="2 0.9 3 0.9 3 0.9 5 0.9 7 0.9 4 0.9 5 0.9 7 0.9 4 0.9 3 0.9 5 0.9 4 0.9" opacity="1.0"/><path d="M10 98.0H75" stroke="#333" stroke-width="1.15" stroke-dasharray="3 0.9 4 0.9 4 0.9 4 0.9 2 0.9 5 0.9 4 0.9 4 0.9 4 0.9 7 0.9 3 0.9 6 0.9" opacity="1.0"/></svg><div class="t" style="left:760.49px;top:791.67px;font-size:29.80px;font-weight:700;color:#36414c;transform:scaleX(1.0060);transform-origin:0 0;">NDA form</div><div class="t" style="left:760.63px;top:831.15px;font-size:24.71px;color:#5b6c7b;transform:scaleX(0.9362);transform-origin:0 0;">Mar 16, 2021 at 7:44pm</div><div class="t" style="left:761.85px;top:881.58px;font-size:24.35px;font-weight:700;color:#627384;transform:scaleX(0.8683);transform-origin:0 0;">Signers: 1</div><div class="a" style="left:1178.5px;top:774px;width:184.50px;height:56.25px;background:#fff;border:2px solid #8594a0;border-radius:8px;box-sizing:border-box;"></div><div class="t" style="left:1200.88px;top:802.83px;font-size:24.35px;font-weight:700;color:#36414c;transform:scaleX(0.9162);transform-origin:0 0;">Invite to Sign</div><div class="a" style="left:1378px;top:774px;width:276.75px;height:56.25px;background:#fff;border:2px solid #8594a0;border-radius:8px;box-sizing:border-box;"></div><svg class="a" style="left:1401.5px;top:788.5px;width:28.75px;height:26.75px;overflow:visible;" viewBox="0 0 28.75 26.75" preserveAspectRatio="none"><g fill="none" stroke="#2f3a45" stroke-width="3.5" stroke-linecap="round"><g transform="translate(14.4 13) rotate(-40)"><path d="M3.8 -5.3H9.8A4.75 4.75 0 0 1 9.8 4.2H0.3Q-2.8 4.2 -2.8 1.3"/><path d="M-3.8 5.3H-9.8A4.75 4.75 0 0 1 -9.8 -4.2H-0.3Q2.8 -4.2 2.8 -1.3"/></g></g></svg><div class="t" style="left:1444.58px;top:802.83px;font-size:24.35px;font-weight:700;color:#36414c;transform:scaleX(0.9217);transform-origin:0 0;">Create Invite Link</div><div class="a" style="left:1671px;top:774px;width:144.00px;height:56.25px;background:#fff;border:2px solid #8594a0;border-radius:8px;box-sizing:border-box;"></div><svg class="a" style="left:1693.5px;top:799px;width:28.70px;height:7.50px;overflow:visible;" viewBox="0 0 28.7 7.5" preserveAspectRatio="none"><g fill="#2f3a45"><circle cx="3.6" cy="3.7" r="3.5"/><circle cx="14.35" cy="3.7" r="3.5"/><circle cx="25.1" cy="3.7" r="3.5"/></g></svg><div class="t" style="left:1735.84px;top:802.83px;font-size:24.35px;font-weight:700;color:#36414c;transform:scaleX(0.9758);transform-origin:0 0;">More</div><div class="a" style="left:581px;top:1119.25px;width:1264.00px;height:1.50px;background:#e1e5e9;"></div><div class="a" style="left:599.5px;top:1005.5px;width:28.50px;height:28.50px;background:#fff;border:2px solid #8594a0;border-radius:6px;box-sizing:border-box;"></div><div class="a" style="left:647.5px;top:962.5px;width:85.50px;height:115.00px;background:#fff;border:1px solid #dde1e5;border-radius:3px;box-sizing:border-box;"></div><svg class="a" style="left:647.5px;top:962.5px;width:85.50px;height:115.00px;overflow:visible;" viewBox="0 0 85.5 115" preserveAspectRatio="none"><path d="M28 12.0H57" stroke="#333" stroke-width="1.0" stroke-dasharray="3 0.9 7 0.9 6 0.9 3 0.9 6 0.9 2 0.9 3 0.9 2 0.9 2 0.9 3 0.9 5 0.9 4 0.9" opacity="1.0"/><path d="M10 15.0H75" stroke="#555" stroke-width="1.0" stroke-dasharray="4 0.9 6 0.9 2 0.9 5 0.9 3 0.9 3 0.9 2 0.9 4 0.9 5 0.9 4 0.9 2 0.9 6 0.9" opacity="1.0"/><path d="M10 17.5H75" stroke="#666" stroke-width="0.9" stroke-dasharray="6 0.9 2 0.9 5 0.9 4 0.9 4 0.9 3 0.9 7 0.9 5 0.9 5 0.9 7 0.9 4 0.9 4 0.9" opacity="1.0"/><path d="M10 21.0H75" stroke="#333" stroke-width="1.15" stroke-dasharray="7 0.9 7 0.9 3 0.9 6 0.9 3 0.9 3 0.9 7 0.9 5 0.9 6 0.9 4 0.9 6 0.9 3 0.9" opacity="1.0"/><path d="M10 23.6H50" stroke="#333" stroke-width="1.15" stroke-dasharray="7 0.9 2 0.9 5 0.9 5 0.9 6 0.9 7 0.9 6 0.9 6 0.9 5 0.9 4 0.9 6 0.9 7 0.9" opacity="1.0"/><path d="M10 26.2H75" stroke="#333" stroke-width="1.15" stroke-dasharray="6 0.9 2 0.9 5 0.9 4 0.9 5 0.9 5 0.9 4 0.9 4 0.9 5 0.9 4 0.9 6 0.9 3 0.9" opacity="1.0"/><path d="M10 28.8H50" stroke="#333" stroke-width="1.15" stroke-dasharray="5 0.9 3 0.9 5 0.9 6 0.9 6 0.9 4 0.9 2 0.9 4 0.9 6 0.9 6 0.9 6 0.9 2 0.9" opacity="1.0"/><path d="M10 31.4H75" stroke="#333" stroke-width="1.15" stroke-dasharray="4 0.9 2 0.9 5 0.9 7 0.9 2 0.9 4 0.9 2 0.9 6 0.9 5 0.9 7 0.9 5 0.9 3 0.9" opacity="1.0"/><path d="M10 34.0H75" stroke="#333" stroke-width="1.15" stroke-dasharray="5 0.9 4 0.9 2 0.9 4 0.9 3 0.9 2 0.9 4 0.9 4 0.9 6 0.9 5 0.9 6 0.9 4 0.9" opacity="1.0"/><path d="M10 39.0H75" stroke="#333" stroke-width="1.15" stroke-dasharray="2 0.9 5 0.9 3 0.9 3 0.9 7 0.9 2 0.9 7 0.9 6 0.9 2 0.9 7 0.9 7 0.9 2 0.9" opacity="1.0"/><path d="M10 41.6H50" stroke="#5a5a5a" stroke-width="1.15" stroke-dasharray="4 0.9 7 0.9 2 0.9 5 0.9 4 0.9 5 0.9 5 0.9 4 0.9 4 0.9 6 0.9 6 0.9 2 0.9" opacity="1.0"/><path d="M10 44.2H75" stroke="#333" stroke-width="1.15" stroke-dasharray="3 0.9 7 0.9 3 0.9 7 0.9 5 0.9 7 0.9 5 0.9 7 0.9 2 0.9 3 0.9 5 0.9 2 0.9" opacity="1.0"/><path d="M10 46.8H75" stroke="#5a5a5a" stroke-width="1.15" stroke-dasharray="7 0.9 3 0.9 3 0.9 2 0.9 6 0.9 3 0.9 6 0.9 3 0.9 5 0.9 2 0.9 5 0.9 5 0.9" opacity="1.0"/><path d="M10 49.4H50" stroke="#333" stroke-width="1.15" stroke-dasharray="2 0.9 3 0.9 4 0.9 3 0.9 5 0.9 4 0.9 6 0.9 2 0.9 3 0.9 2 0.9 4 0.9 3 0.9" opacity="1.0"/><path d="M10 52.0H75" stroke="#333" stroke-width="1.15" stroke-dasharray="5 0.9 2 0.9 7 0.9 4 0.9 5 0.9 2 0.9 7 0.9 4 0.9 6 0.9 7 0.9 5 0.9 6 0.9" opacity="1.0"/><path d="M10 54.6H75" stroke="#333" stroke-width="1.15" stroke-dasharray="3 0.9 6 0.9 5 0.9 5 0.9 3 0.9 6 0.9 4 0.9 7 0.9 7 0.9 3 0.9 4 0.9 3 0.9" opacity="1.0"/><path d="M10 57.2H50" stroke="#5a5a5a" stroke-width="1.15" stroke-dasharray="6 0.9 2 0.9 5 0.9 6 0.9 3 0.9 2 0.9 6 0.9 2 0.9 3 0.9 2 0.9 5 0.9 6 0.9" opacity="1.0"/><path d="M10 59.8H75" stroke="#333" stroke-width="1.15" stroke-dasharray="2 0.9 5 0.9 6 0.9 6 0.9 5 0.9 4 0.9 3 0.9 6 0.9 6 0.9 3 0.9 4 0.9 5 0.9" opacity="1.0"/><path d="M10 62.4H75" stroke="#333" stroke-width="1.15" stroke-dasharray="4 0.9 7 0.9 6 0.9 7 0.9 4 0.9 7 0.9 4 0.9 4 0.9 4 0.9 4 0.9 3 0.9 2 0.9" opacity="1.0"/><path d="M10 65.0H75" stroke="#333" stroke-width="1.15" stroke-dasharray="7 0.9 7 0.9 3 0.9 4 0.9 5 0.9 4 0.9 5 0.9 3 0.9 5 0.9 4 0.9 6 0.9 3 0.9" opacity="1.0"/><path d="M10 67.6H75" stroke="#333" stroke-width="1.15" stroke-dasharray="6 0.9 2 0.9 2 0.9 5 0.9 5 0.9 6 0.9 6 0.9 4 0.9 2 0.9 3 0.9 5 0.9 5 0.9" opacity="1.0"/><path d="M10 70.2H75" stroke="#333" stroke-width="1.15" stroke-dasharray="2 0.9 6 0.9 5 0.9 2 0.9 5 0.9 7 0.9 5 0.9 7 0.9 6 0.9 4 0.9 2 0.9 4 0.9" opacity="1.0"/><path d="M10 72.8H75" stroke="#333" stroke-width="1.15" stroke-dasharray="7 0.9 7 0.9 2 0.9 6 0.9 5 0.9 3 0.9 4 0.9 3 0.9 2 0.9 4 0.9 2 0.9 6 0.9" opacity="1.0"/><path d="M10 77.8H75" stroke="#5a5a5a" stroke-width="1.15" stroke-dasharray="5 0.9 4 0.9 3 0.9 2 0.9 2 0.9 6 0.9 7 0.9 4 0.9 6 0.9 5 0.9 7 0.9 4 0.9" opacity="1.0"/><path d="M10 80.4H75" stroke="#5a5a5a" stroke-width="1.15" stroke-dasharray="5 0.9 4 0.9 7 0.9 6 0.9 2 0.9 6 0.9 5 0.9 3 0.9 5 0.9 3 0.9 4 0.9 4 0.9" opacity="1.0"/><path d="M10 83.0H75" stroke="#333" stroke-width="1.15" stroke-dasharray="2 0.9 5 0.9 2 0.9 4 0.9 5 0.9 2 0.9 5 0.9 3 0.9 5 0.9 4 0.9 3 0.9 5 0.9" opacity="1.0"/><path d="M10 85.6H75" stroke="#5a5a5a" stroke-width="1.15" stroke-dasharray="7 0.9 4 0.9 5 0.9 4 0.9 2 0.9 7 0.9 7 0.9 7 0.9 2 0.9 2 0.9 5 0.9 7 0.9" opacity="1.0"/><path d="M10 88.2H50" stroke="#333" stroke-width="1.15" stroke-dasharray="5 0.9 5 0.9 7 0.9 2 0.9 7 0.9 4 0.9 7 0.9 5 0.9 6 0.9 3 0.9 4 0.9 3 0.9" opacity="1.0"/><path d="M10 90.8H50" stroke="#5a5a5a" stroke-width="1.15" stroke-dasharray="6 0.9 2 0.9 6 0.9 6 0.9 3 0.9 6 0.9 2 0.9 3 0.9 3 0.9 5 0.9 6 0.9 5 0.9" opacity="1.0"/><path d="M10 93.4H75" stroke="#5a5a5a" stroke-width="1.15" stroke-dasharray="6 0.9 3 0.9 3 0.9 6 0.9 4 0.9 4 0.9 6 0.9 3 0.9 6 0.9 6 0.9 4 0.9 6 0.9" opacity="1.0"/><path d="M10 96.0H75" stroke="#333" stroke-width="1.15" stroke-dasharray="6 0.9 7 0.9 7 0.9 6 0.9 3 0.9 5 0.9 2 0.9 7 0.9 5 0.9 4 0.9 7 0.9 3 0.9" opacity="1.0"/><path d="M10 98.6H75" stroke="#5a5a5a" stroke-width="1.15" stroke-dasharray="2 0.9 5 0.9 2 0.9 6 0.9 5 0.9 3 0.9 4 0.9 3 0.9 2 0.9 4 0.9 5 0.9 3 0.9" opacity="1.0"/></svg><div class="t" style="left:760.49px;top:980.17px;font-size:29.80px;font-weight:700;color:#36414c;transform:scaleX(1.0060);transform-origin:0 0;">NDA form</div><div class="t" style="left:760.61px;top:1019.65px;font-size:24.71px;color:#5b6c7b;transform:scaleX(0.9434);transform-origin:0 0;">Mar 11, 2021 at 5:46pm</div><div class="t" style="left:761.84px;top:1070.08px;font-size:24.35px;font-weight:700;color:#627384;transform:scaleX(0.8790);transform-origin:0 0;">Signers: 3</div><div class="a" style="left:1178.5px;top:962.5px;width:184.50px;height:56.25px;background:#fff;border:2px solid #8594a0;border-radius:8px;box-sizing:border-box;"></div><div class="t" style="left:1200.88px;top:991.33px;font-size:24.35px;font-weight:700;color:#36414c;transform:scaleX(0.9162);transform-origin:0 0;">Invite to Sign</div><div class="a" style="left:1378px;top:962.5px;width:276.75px;height:56.25px;background:#fff;border:2px solid #8594a0;border-radius:8px;box-sizing:border-box;"></div><svg class="a" style="left:1401.5px;top:977.0px;width:28.75px;height:26.75px;overflow:visible;" viewBox="0 0 28.75 26.75" preserveAspectRatio="none"><g fill="none" stroke="#2f3a45" stroke-width="3.5" stroke-linecap="round"><g transform="translate(14.4 13) rotate(-40)"><path d="M3.8 -5.3H9.8A4.75 4.75 0 0 1 9.8 4.2H0.3Q-2.8 4.2 -2.8 1.3"/><path d="M-3.8 5.3H-9.8A4.75 4.75 0 0 1 -9.8 -4.2H-0.3Q2.8 -4.2 2.8 -1.3"/></g></g></svg><div class="t" style="left:1444.58px;top:991.33px;font-size:24.35px;font-weight:700;color:#36414c;transform:scaleX(0.9217);transform-origin:0 0;">Create Invite Link</div><div class="a" style="left:1671px;top:962.5px;width:144.00px;height:56.25px;background:#fff;border:2px solid #8594a0;border-radius:8px;box-sizing:border-box;"></div><svg class="a" style="left:1693.5px;top:987.5px;width:28.70px;height:7.50px;overflow:visible;" viewBox="0 0 28.7 7.5" preserveAspectRatio="none"><g fill="#2f3a45"><circle cx="3.6" cy="3.7" r="3.5"/><circle cx="14.35" cy="3.7" r="3.5"/><circle cx="25.1" cy="3.7" r="3.5"/></g></svg><div class="t" style="left:1735.84px;top:991.33px;font-size:24.35px;font-weight:700;color:#36414c;transform:scaleX(0.9758);transform-origin:0 0;">More</div><div class="a" style="left:581px;top:1307.75px;width:1264.00px;height:1.50px;background:#e1e5e9;"></div><div class="a" style="left:599.5px;top:1194px;width:28.50px;height:28.50px;background:#fff;border:2px solid #8594a0;border-radius:6px;box-sizing:border-box;"></div><div class="a" style="left:647.5px;top:1151px;width:85.50px;height:115.00px;background:#fff;border:1px solid #dde1e5;border-radius:3px;box-sizing:border-box;"></div><svg class="a" style="left:647.5px;top:1151px;width:85.50px;height:115.00px;overflow:visible;" viewBox="0 0 85.5 115" preserveAspectRatio="none"><path d="M28 12.0H57" stroke="#333" stroke-width="1.0" stroke-dasharray="7 0.9 7 0.9 2 0.9 3 0.9 5 0.9 4 0.9 5 0.9 3 0.9 3 0.9 4 0.9 4 0.9 4 0.9" opacity="1.0"/><path d="M10 15.0H75" stroke="#555" stroke-width="1.0" stroke-dasharray="4 0.9 2 0.9 7 0.9 4 0.9 7 0.9 2 0.9 3 0.9 3 0.9 4 0.9 5 0.9 3 0.9 6 0.9" opacity="1.0"/><path d="M10 17.5H75" stroke="#666" stroke-width="0.9" stroke-dasharray="3 0.9 3 0.9 5 0.9 7 0.9 3 0.9 3 0.9 7 0.9 4 0.9 6 0.9 3 0.9 3 0.9 7 0.9" opacity="1.0"/><path d="M10 21.0H75" stroke="#5a5a5a" stroke-width="1.15" stroke-dasharray="6 0.9 5 0.9 6 0.9 3 0.9 7 0.9 4 0.9 5 0.9 4 0.9 2 0.9 2 0.9 6 0.9 5 0.9" opacity="1.0"/><path d="M10 23.6H75" stroke="#333" stroke-width="1.15" stroke-dasharray="5 0.9 7 0.9 5 0.9 3 0.9 5 0.9 6 0.9 5 0.9 4 0.9 5 0.9 6 0.9 5 0.9 3 0.9" opacity="1.0"/><path d="M10 26.2H75" stroke="#333" stroke-width="1.15" stroke-dasharray="3 0.9 6 0.9 4 0.9 2 0.9 4 0.9 6 0.9 3 0.9 4 0.9 5 0.9 7 0.9 6 0.9 3 0.9" opacity="1.0"/><path d="M10 28.8H75" stroke="#333" stroke-width="1.15" stroke-dasharray="6 0.9 4 0.9 7 0.9 3 0.9 6 0.9 2 0.9 7 0.9 6 0.9 6 0.9 4 0.9 6 0.9 7 0.9" opacity="1.0"/><path d="M10 31.4H75" stroke="#333" stroke-width="1.15" stroke-dasharray="7 0.9 7 0.9 4 0.9 2 0.9 5 0.9 7 0.9 6 0.9 7 0.9 4 0.9 5 0.9 5 0.9 4 0.9" opacity="1.0"/><path d="M10 34.0H75" stroke="#333" stroke-width="1.15" stroke-dasharray="6 0.9 5 0.9 7 0.9 2 0.9 4 0.9 6 0.9 3 0.9 4 0.9 7 0.9 5 0.9 3 0.9 6 0.9" opacity="1.0"/><path d="M10 36.6H75" stroke="#333" stroke-width="1.15" stroke-dasharray="6 0.9 4 0.9 2 0.9 7 0.9 2 0.9 6 0.9 5 0.9 7 0.9 3 0.9 3 0.9 6 0.9 7 0.9" opacity="1.0"/><path d="M10 39.2H75" stroke="#333" stroke-width="1.15" stroke-dasharray="5 0.9 6 0.9 6 0.9 4 0.9 5 0.9 4 0.9 2 0.9 5 0.9 4 0.9 7 0.9 4 0.9 3 0.9" opacity="1.0"/><path d="M10 41.8H75" stroke="#333" stroke-width="1.15" stroke-dasharray="5 0.9 4 0.9 5 0.9 3 0.9 4 0.9 4 0.9 7 0.9 3 0.9 4 0.9 6 0.9 6 0.9 3 0.9" opacity="1.0"/><path d="M10 44.4H75" stroke="#333" stroke-width="1.15" stroke-dasharray="4 0.9 7 0.9 4 0.9 2 0.9 2 0.9 7 0.9 3 0.9 2 0.9 3 0.9 5 0.9 4 0.9 2 0.9" opacity="1.0"/><path d="M10 47.0H75" stroke="#5a5a5a" stroke-width="1.15" stroke-dasharray="7 0.9 5 0.9 4 0.9 6 0.9 3 0.9 4 0.9 5 0.9 7 0.9 5 0.9 6 0.9 6 0.9 7 0.9" opacity="1.0"/><path d="M10 49.6H75" stroke="#5a5a5a" stroke-width="1.15" stroke-dasharray="4 0.9 6 0.9 4 0.9 6 0.9 5 0.9 3 0.9 2 0.9 2 0.9 3 0.9 5 0.9 7 0.9 2 0.9" opacity="1.0"/><path d="M10 52.2H75" stroke="#5a5a5a" stroke-width="1.15" stroke-dasharray="3 0.9 7 0.9 7 0.9 7 0.9 4 0.9 4 0.9 2 0.9 7 0.9 6 0.9 6 0.9 7 0.9 4 0.9" opacity="1.0"/><path d="M10 54.8H75" stroke="#333" stroke-width="1.15" stroke-dasharray="7 0.9 2 0.9 5 0.9 5 0.9 7 0.9 4 0.9 3 0.9 2 0.9 6 0.9 4 0.9 7 0.9 6 0.9" opacity="1.0"/><path d="M10 57.4H50" stroke="#333" stroke-width="1.15" stroke-dasharray="2 0.9 7 0.9 3 0.9 2 0.9 2 0.9 7 0.9 2 0.9 7 0.9 6 0.9 5 0.9 7 0.9 5 0.9" opacity="1.0"/><path d="M10 60.0H75" stroke="#5a5a5a" stroke-width="1.15" stroke-dasharray="3 0.9 7 0.9 2 0.9 2 0.9 4 0.9 7 0.9 7 0.9 5 0.9 3 0.9 2 0.9 2 0.9 4 0.9" opacity="1.0"/><path d="M10 62.6H75" stroke="#333" stroke-width="1.15" stroke-dasharray="2 0.9 2 0.9 3 0.9 5 0.9 2 0.9 6 0.9 5 0.9 7 0.9 7 0.9 4 0.9 7 0.9 3 0.9" opacity="1.0"/><path d="M10 65.2H50" stroke="#333" stroke-width="1.15" stroke-dasharray="3 0.9 3 0.9 3 0.9 5 0.9 5 0.9 2 0.9 5 0.9 4 0.9 6 0.9 2 0.9 6 0.9 7 0.9" opacity="1.0"/><path d="M10 67.8H50" stroke="#333" stroke-width="1.15" stroke-dasharray="2 0.9 6 0.9 4 0.9 3 0.9 3 0.9 5 0.9 6 0.9 6 0.9 4 0.9 7 0.9 6 0.9 5 0.9" opacity="1.0"/><path d="M10 70.4H75" stroke="#5a5a5a" stroke-width="1.15" stroke-dasharray="5 0.9 7 0.9 4 0.9 2 0.9 3 0.9 5 0.9 6 0.9 6 0.9 2 0.9 4 0.9 6 0.9 6 0.9" opacity="1.0"/><path d="M10 73.0H75" stroke="#333" stroke-width="1.15" stroke-dasharray="6 0.9 3 0.9 3 0.9 4 0.9 6 0.9 4 0.9 2 0.9 2 0.9 5 0.9 2 0.9 5 0.9 3 0.9" opacity="1.0"/><path d="M10 75.6H50" stroke="#5a5a5a" stroke-width="1.15" stroke-dasharray="2 0.9 5 0.9 6 0.9 2 0.9 2 0.9 7 0.9 6 0.9 5 0.9 2 0.9 2 0.9 4 0.9 7 0.9" opacity="1.0"/><path d="M10 78.2H75" stroke="#5a5a5a" stroke-width="1.15" stroke-dasharray="4 0.9 3 0.9 4 0.9 7 0.9 6 0.9 2 0.9 5 0.9 7 0.9 2 0.9 2 0.9 7 0.9 3 0.9" opacity="1.0"/><path d="M10 80.8H75" stroke="#333" stroke-width="1.15" stroke-dasharray="7 0.9 7 0.9 6 0.9 3 0.9 7 0.9 3 0.9 2 0.9 7 0.9 4 0.9 6 0.9 6 0.9 2 0.9" opacity="1.0"/><path d="M10 83.4H75" stroke="#333" stroke-width="1.15" stroke-dasharray="2 0.9 5 0.9 7 0.9 7 0.9 4 0.9 6 0.9 5 0.9 5 0.9 5 0.9 4 0.9 6 0.9 2 0.9" opacity="1.0"/><path d="M10 86.0H75" stroke="#333" stroke-width="1.15" stroke-dasharray="5 0.9 7 0.9 4 0.9 3 0.9 4 0.9 2 0.9 7 0.9 4 0.9 7 0.9 5 0.9 5 0.9 5 0.9" opacity="1.0"/><path d="M10 88.6H75" stroke="#5a5a5a" stroke-width="1.15" stroke-dasharray="7 0.9 3 0.9 6 0.9 2 0.9 6 0.9 5 0.9 3 0.9 5 0.9 3 0.9 4 0.9 2 0.9 7 0.9" opacity="1.0"/><path d="M10 91.2H75" stroke="#333" stroke-width="1.15" stroke-dasharray="5 0.9 6 0.9 6 0.9 4 0.9 5 0.9 5 0.9 2 0.9 4 0.9 7 0.9 5 0.9 4 0.9 7 0.9" opacity="1.0"/><path d="M10 93.8H50" stroke="#333" stroke-width="1.15" stroke-dasharray="3 0.9 6 0.9 2 0.9 7 0.9 5 0.9 7 0.9 2 0.9 6 0.9 5 0.9 5 0.9 5 0.9 5 0.9" opacity="1.0"/><path d="M10 96.4H75" stroke="#333" stroke-width="1.15" stroke-dasharray="5 0.9 5 0.9 2 0.9 7 0.9 6 0.9 7 0.9 3 0.9 2 0.9 3 0.9 6 0.9 7 0.9 7 0.9" opacity="1.0"/><path d="M10 101.4H75" stroke="#5a5a5a" stroke-width="1.15" stroke-dasharray="6 0.9 2 0.9 2 0.9 2 0.9 6 0.9 3 0.9 4 0.9 6 0.9 3 0.9 5 0.9 5 0.9 3 0.9" opacity="1.0"/><path d="M10 104.0H75" stroke="#5a5a5a" stroke-width="1.15" stroke-dasharray="5 0.9 4 0.9 7 0.9 5 0.9 6 0.9 2 0.9 4 0.9 6 0.9 2 0.9 6 0.9 4 0.9 4 0.9" opacity="1.0"/><path d="M10 106.6H50" stroke="#333" stroke-width="1.15" stroke-dasharray="3 0.9 2 0.9 3 0.9 5 0.9 3 0.9 3 0.9 4 0.9 3 0.9 7 0.9 2 0.9 4 0.9 6 0.9" opacity="1.0"/><path d="M10 109.2H75" stroke="#333" stroke-width="1.15" stroke-dasharray="6 0.9 7 0.9 5 0.9 2 0.9 6 0.9 7 0.9 4 0.9 3 0.9 3 0.9 4 0.9 6 0.9 2 0.9" opacity="1.0"/><path d="M10 111.8H75" stroke="#333" stroke-width="1.15" stroke-dasharray="4 0.9 3 0.9 3 0.9 7 0.9 6 0.9 2 0.9 5 0.9 5 0.9 4 0.9 2 0.9 6 0.9 5 0.9" opacity="1.0"/><path d="M10 114.4H75" stroke="#333" stroke-width="1.15" stroke-dasharray="3 0.9 5 0.9 3 0.9 4 0.9 4 0.9 7 0.9 2 0.9 2 0.9 5 0.9 5 0.9 7 0.9 4 0.9" opacity="1.0"/><path d="M10 117.0H75" stroke="#5a5a5a" stroke-width="1.15" stroke-dasharray="7 0.9 2 0.9 6 0.9 6 0.9 2 0.9 2 0.9 3 0.9 4 0.9 4 0.9 6 0.9 3 0.9 3 0.9" opacity="1.0"/><rect x="22" y="100" width="20" height="2.4" fill="#e8d94c"/></svg><div class="t" style="left:760.52px;top:1168.67px;font-size:29.80px;font-weight:700;color:#36414c;transform:scaleX(0.9885);transform-origin:0 0;">NDA form blank</div><div class="t" style="left:760.61px;top:1208.15px;font-size:24.71px;color:#5b6c7b;transform:scaleX(0.9434);transform-origin:0 0;">Mar 11, 2021 at 5:40pm</div><div class="t" style="left:761.84px;top:1258.58px;font-size:24.35px;font-weight:700;color:#627384;transform:scaleX(0.8810);transform-origin:0 0;">Signers: 2</div><div class="a" style="left:1178.5px;top:1151px;width:184.50px;height:56.25px;background:#fff;border:2px solid #8594a0;border-radius:8px;box-sizing:border-box;"></div><div class="t" style="left:1200.88px;top:1179.83px;font-size:24.35px;font-weight:700;color:#36414c;transform:scaleX(0.9162);transform-origin:0 0;">Invite to Sign</div><div class="a" style="left:1378px;top:1151px;width:276.75px;height:56.25px;background:#fff;border:2px solid #8594a0;border-radius:8px;box-sizing:border-box;"></div><svg class="a" style="left:1401.5px;top:1165.5px;width:28.75px;height:26.75px;overflow:visible;" viewBox="0 0 28.75 26.75" preserveAspectRatio="none"><g fill="none" stroke="#2f3a45" stroke-width="3.5" stroke-linecap="round"><g transform="translate(14.4 13) rotate(-40)"><path d="M3.8 -5.3H9.8A4.75 4.75 0 0 1 9.8 4.2H0.3Q-2.8 4.2 -2.8 1.3"/><path d="M-3.8 5.3H-9.8A4.75 4.75 0 0 1 -9.8 -4.2H-0.3Q2.8 -4.2 2.8 -1.3"/></g></g></svg><div class="t" style="left:1444.58px;top:1179.83px;font-size:24.35px;font-weight:700;color:#36414c;transform:scaleX(0.9217);transform-origin:0 0;">Create Invite Link</div><div class="a" style="left:1671px;top:1151px;width:144.00px;height:56.25px;background:#fff;border:2px solid #8594a0;border-radius:8px;box-sizing:border-box;"></div><svg class="a" style="left:1693.5px;top:1176px;width:28.70px;height:7.50px;overflow:visible;" viewBox="0 0 28.7 7.5" preserveAspectRatio="none"><g fill="#2f3a45"><circle cx="3.6" cy="3.7" r="3.5"/><circle cx="14.35" cy="3.7" r="3.5"/><circle cx="25.1" cy="3.7" r="3.5"/></g></svg><div class="t" style="left:1735.84px;top:1179.83px;font-size:24.35px;font-weight:700;color:#36414c;transform:scaleX(0.9758);transform-origin:0 0;">More</div></div><div class="a" style="left:0;top:0;width:0;height:0"><div class="a" style="left:22px;top:209.5px;width:591px;height:447px;background:#fff;border-radius:10px;box-shadow:0 6px 18px rgba(30,40,50,.16),0 1px 3px rgba(30,40,50,.08);overflow:hidden"><div class="a" style="left:0;top:222px;width:591px;height:1.5px;background:#e4e7eb"></div><div class="a" style="left:0;top:288.25px;width:591px;height:71.75px;background:#e3e6ea"></div></div><div class="t" style="left:49.89px;top:244.96px;font-size:23.55px;font-weight:700;color:#56687a;transform:scaleX(0.9369);transform-origin:0 0;">DOCUMENTS</div><svg class="a" style="left:52.6px;top:296px;width:25.40px;height:28.00px;overflow:visible;" viewBox="0 0 25.4 28" preserveAspectRatio="none"><g fill="none" stroke="#3b4854" stroke-width="3" stroke-linecap="round" stroke-linejoin="round"><path d="M10.5 26.5H4a2.5 2.5 0 0 1-2.5-2.5V4A2.5 2.5 0 0 1 4 1.5H14L21.5 9V13.5"/><path d="M14 1.8V9H21"/><path d="M18.5 27V16.8M14.3 21L18.5 16.6L22.7 21"/></g></svg><div class="t" style="left:93.16px;top:310.99px;font-size:26.89px;color:#2f3a45;transform:scaleX(0.9713);transform-origin:0 0;">Upload Documents</div><svg class="a" style="left:53px;top:362px;width:25.50px;height:28.00px;overflow:visible;" viewBox="0 0 25.5 28" preserveAspectRatio="none"><g fill="none" stroke="#3b4854" stroke-width="3" stroke-linejoin="round"><rect x="1.5" y="8" width="22" height="18.5" rx="2"/><path d="M7 8V3a1.5 1.5 0 0 1 1.5-1.5H17a1.5 1.5 0 0 1 1.5 1.5V8"/></g></svg><div class="t" style="left:93.84px;top:380.59px;font-size:26.60px;color:#9aa1a7;transform:scaleX(1.0056);transform-origin:0 0;">Create Document Group</div><div class="t" style="left:51.88px;top:469.31px;font-size:23.11px;font-weight:700;color:#aab3bb;transform:scaleX(0.8982);transform-origin:0 0;">TEMPLATES</div><svg class="a" style="left:54.5px;top:519px;width:21.80px;height:28.70px;overflow:visible;" viewBox="0 0 21.4 28.1" preserveAspectRatio="none"><g fill="none" stroke="#56687a" stroke-width="3" stroke-linejoin="round"><path d="M3.5 1.5H13L19.9 8.4V24.6a2 2 0 0 1-2 2H3.5a2 2 0 0 1-2-2V3.5a2 2 0 0 1 2-2Z"/><path d="M13 1.8V8.4H19.6" stroke-width="2"/><path d="M5.5 14.5H15.5M10.5 14.5V23" stroke-width="3"/></g></svg><div class="t" style="left:93.09px;top:533.59px;font-size:26.89px;color:#2f3a45;transform:scaleX(1.0031);transform-origin:0 0;">Upload Templates</div><svg class="a" style="left:52.4px;top:593.4px;width:25.80px;height:25.50px;overflow:visible;" viewBox="0 0 25.3 25" preserveAspectRatio="none"><g fill="none" stroke="#9aa1a7" stroke-width="3" stroke-linejoin="round"><path d="M14 23.5H3.5a2 2 0 0 1-2-2V8a2 2 0 0 1 2-2H21.5a2 2 0 0 1 2 2V13"/><path d="M7 6V3a1.5 1.5 0 0 1 1.5-1.5H16.5A1.5 1.5 0 0 1 18 3V6"/><path d="M6 11.5H14M10 11.5V18"/><path d="M19 15V24.5M14.3 19.8H23.7" stroke-width="2.8"/></g></svg><div class="t" style="left:93.79px;top:605.70px;font-size:25.44px;color:#9aa1a7;transform:scaleX(1.0453);transform-origin:0 0;">Create Document Group</div></div><div class="t" style="left:1911.08px;top:160.31px;font-size:23.69px;color:#5b6c7b;transform:scaleX(0.9824);transform-origin:0 0;">1 document selected</div><svg class="a" style="left:1927px;top:205px;width:43.50px;height:42.70px;overflow:visible;" viewBox="0 0 43.5 42.7" preserveAspectRatio="none"><rect x="1.9" y="1.9" width="39.7" height="38.9" rx="6" fill="none" stroke="#0a77d0" stroke-width="3.8"/><path d="M10.5 21.35H33" stroke="#0a77d0" stroke-width="3.8" stroke-linecap="round"/></svg><div class="t" style="left:1984.73px;top:226.48px;font-size:28.34px;color:#0a77d0;transform:scaleX(0.9191);transform-origin:0 0;">Deselect</div><div class="a" style="left:1890.5px;top:294px;width:383.50px;height:1.50px;background:#e1e5e9;"></div><div class="t" style="left:1958.75px;top:816.94px;font-size:26.16px;color:#0a77d0;">Send for Review</div><svg class="a" style="left:1930.9px;top:877.5px;width:36.30px;height:32.60px;overflow:visible;" viewBox="0 0 36.3 32.6" preserveAspectRatio="none"><g fill="none" stroke="#0a77d0" stroke-width="3.4" stroke-linecap="round" stroke-linejoin="round"><path d="M2.3 15V9.2H33.7V29.1H13.8"/><path d="M10.6 9V2H27V9"/><path d="M7.4 19V29.6M2.1 24.3H12.7"/></g></svg><div class="t" style="left:1985.56px;top:892.74px;font-size:26.16px;color:#0a77d0;transform:scaleX(0.9925);transform-origin:0 0;">Create Group and Sign</div><div class="a" style="left:1912px;top:959.5px;width:362.00px;height:1.50px;background:#e1e5e9;"></div><svg class="a" style="left:1927px;top:1006px;width:43.50px;height:42.70px;overflow:visible;" viewBox="0 0 43.5 42.7" preserveAspectRatio="none"><g fill="none" stroke="#0a77d0" stroke-width="3.8" stroke-linecap="round" stroke-linejoin="round"><path d="M21.75 2V28M12.5 19L21.75 28.2L31 19"/><path d="M2 26V35.5a5.3 5.3 0 0 0 5.3 5.3H36.2a5.3 5.3 0 0 0 5.3-5.3V26"/></g></svg><div class="t" style="left:1984.54px;top:1027.79px;font-size:27.18px;color:#0a77d0;transform:scaleX(1.0047);transform-origin:0 0;">Download</div><svg class="a" style="left:1930.9px;top:1085.5px;width:36.30px;height:35.90px;overflow:visible;" viewBox="0 0 36.3 35.9" preserveAspectRatio="none"><g fill="none" stroke="#0a77d0" stroke-width="3.4" stroke-linecap="round" stroke-linejoin="round"><path d="M1.8 7.5H34.5"/><path d="M12 7V3.2a1.5 1.5 0 0 1 1.5-1.5H22.8a1.5 1.5 0 0 1 1.5 1.5V7"/><path d="M5.5 8L7 20M30.8 8L28.2 33.5H17"/><path d="M12.6 13V18.5M18.1 13V24.5M23.6 13V27.5" stroke-width="3.2"/><path d="M3.5 28.5H14.5M10.5 24L15 28.5L10.5 33" stroke-width="3"/></g></svg><div class="t" style="left:1984.55px;top:1104.09px;font-size:26.60px;color:#0a77d0;">Delete Document</div><div class="a" style="left:1931.4px;top:1162.3px;width:35.10px;height:2.00px;background:#2d8de2;"></div><div class="a" style="left:2150.5px;top:1090.5px;width:87px;height:87px;border-radius:50%;background:#fff;box-shadow:0 2px 12px rgba(30,40,50,.16)"></div><svg class="a" style="left:2175.3px;top:1117.6px;width:36.80px;height:33.10px;overflow:visible;" viewBox="0 0 36.8 33.1" preserveAspectRatio="none"><g fill="none" stroke="#0a77d0" stroke-width="3.4" stroke-linejoin="round"><path d="M1.8 25.5V3.5a1.7 1.7 0 0 1 1.7-1.7H25.5a1.7 1.7 0 0 1 1.7 1.7V20.5H7Z"/><path d="M27.2 10H33.3a1.7 1.7 0 0 1 1.7 1.7V31.3H11.5V20.5"/><path d="M7.5 8H21.5M7.5 12H21.5M7.5 16H21.5" stroke-width="2"/></g></svg><svg class="a" style="left:1930px;top:1210.9px;width:36.50px;height:35.80px;overflow:visible;" viewBox="0 0 36.5 35.8" preserveAspectRatio="none"><circle cx="18.25" cy="17.9" r="16.1" fill="none" stroke="#5b6c7b" stroke-width="3.6"/></svg><div class="t" style="left:1941.30px;top:1227.47px;font-size:21.80px;font-weight:700;color:#627384;">?</div><div class="t" style="left:2004.42px;top:1228.79px;font-size:26.60px;color:#5b6c7b;transform:scaleX(0.9699);transform-origin:0 0;">Privacy</div><div class="t" style="left:2124.18px;top:1228.79px;font-size:26.60px;color:#5b6c7b;transform:scaleX(1.0346);transform-origin:0 0;">Terms</div><svg class="a" style="left:2239.2px;top:1224.2px;width:34.80px;height:9.00px;overflow:visible;" viewBox="0 0 34.8 9" preserveAspectRatio="none"><g fill="#5b6c7b"><circle cx="4.5" cy="4.5" r="4.3"/><circle cx="17.4" cy="4.5" r="4.3"/><circle cx="30.3" cy="4.5" r="4.3"/></g></svg><div class="a" style="left:0.0px;top:282.5px;width:521.0px;height:521.0px;border-radius:50%;box-shadow:0 10px 46px rgba(20,30,40,.2),0 2px 10px rgba(20,30,40,.07)"></div><div class="a" style="left:0.0px;top:282.5px;width:521.0px;height:521.0px;border-radius:50%;overflow:hidden;background:#f5f7fa"><div class="a" style="left:-0.0px;top:-282.5px;width:2274px;height:1294px;transform-origin:0 0;transform:translate(-36.8px,-303.6px) scale(1.57)"><div class="a" style="left:0;top:0;width:538px;height:1294px;background:#f6f8fb"></div><div class="a" style="left:22px;top:209.5px;width:591px;height:447px;background:#fff;border-radius:10px;box-shadow:0 6px 18px rgba(30,40,50,.16),0 1px 3px rgba(30,40,50,.08);overflow:hidden"><div class="a" style="left:0;top:222px;width:591px;height:1.5px;background:#e4e7eb"></div><div class="a" style="left:0;top:288.25px;width:591px;height:71.75px;background:#e3e6ea"></div></div><div class="t" style="left:49.89px;top:244.96px;font-size:23.55px;font-weight:700;color:#56687a;transform:scaleX(0.9369);transform-origin:0 0;">DOCUMENTS</div><svg class="a" style="left:52.6px;top:296px;width:25.40px;height:28.00px;overflow:visible;" viewBox="0 0 25.4 28" preserveAspectRatio="none"><g fill="none" stroke="#3b4854" stroke-width="3" stroke-linecap="round" stroke-linejoin="round"><path d="M10.5 26.5H4a2.5 2.5 0 0 1-2.5-2.5V4A2.5 2.5 0 0 1 4 1.5H14L21.5 9V13.5"/><path d="M14 1.8V9H21"/><path d="M18.5 27V16.8M14.3 21L18.5 16.6L22.7 21"/></g></svg><div class="t" style="left:93.16px;top:310.99px;font-size:26.89px;color:#2f3a45;transform:scaleX(0.9713);transform-origin:0 0;">Upload Documents</div><svg class="a" style="left:53px;top:362px;width:25.50px;height:28.00px;overflow:visible;" viewBox="0 0 25.5 28" preserveAspectRatio="none"><g fill="none" stroke="#3b4854" stroke-width="3" stroke-linejoin="round"><rect x="1.5" y="8" width="22" height="18.5" rx="2"/><path d="M7 8V3a1.5 1.5 0 0 1 1.5-1.5H17a1.5 1.5 0 0 1 1.5 1.5V8"/></g></svg><div class="t" style="left:93.84px;top:380.59px;font-size:26.60px;color:#9aa1a7;transform:scaleX(1.0056);transform-origin:0 0;">Create Document Group</div><div class="t" style="left:51.88px;top:469.31px;font-size:23.11px;font-weight:700;color:#aab3bb;transform:scaleX(0.8982);transform-origin:0 0;">TEMPLATES</div><svg class="a" style="left:54.5px;top:519px;width:21.80px;height:28.70px;overflow:visible;" viewBox="0 0 21.4 28.1" preserveAspectRatio="none"><g fill="none" stroke="#56687a" stroke-width="3" stroke-linejoin="round"><path d="M3.5 1.5H13L19.9 8.4V24.6a2 2 0 0 1-2 2H3.5a2 2 0 0 1-2-2V3.5a2 2 0 0 1 2-2Z"/><path d="M13 1.8V8.4H19.6" stroke-width="2"/><path d="M5.5 14.5H15.5M10.5 14.5V23" stroke-width="3"/></g></svg><div class="t" style="left:93.09px;top:533.59px;font-size:26.89px;color:#2f3a45;transform:scaleX(1.0031);transform-origin:0 0;">Upload Templates</div><svg class="a" style="left:52.4px;top:593.4px;width:25.80px;height:25.50px;overflow:visible;" viewBox="0 0 25.3 25" preserveAspectRatio="none"><g fill="none" stroke="#9aa1a7" stroke-width="3" stroke-linejoin="round"><path d="M14 23.5H3.5a2 2 0 0 1-2-2V8a2 2 0 0 1 2-2H21.5a2 2 0 0 1 2 2V13"/><path d="M7 6V3a1.5 1.5 0 0 1 1.5-1.5H16.5A1.5 1.5 0 0 1 18 3V6"/><path d="M6 11.5H14M10 11.5V18"/><path d="M19 15V24.5M14.3 19.8H23.7" stroke-width="2.8"/></g></svg><div class="t" style="left:93.79px;top:605.70px;font-size:25.44px;color:#9aa1a7;transform:scaleX(1.0453);transform-origin:0 0;">Create Document Group</div></div></div><div class="a" style="left:0.0px;top:282.5px;width:521.0px;height:521.0px;border-radius:50%;border:10.5px solid #5294fb;box-sizing:border-box"></div><div class="a" style="left:1721.25px;top:332.5px;width:521.0px;height:521.0px;border-radius:50%;box-shadow:0 10px 46px rgba(20,30,40,.2),0 2px 10px rgba(20,30,40,.07)"></div><div class="a" style="left:1721.25px;top:332.5px;width:521.0px;height:521.0px;border-radius:50%;overflow:hidden;background:#fff"><div class="a" style="left:-1721.25px;top:-332.5px;width:2274px;height:1294px"><svg class="a" style="left:1777px;top:436px;width:61.50px;height:49.00px;overflow:visible;" viewBox="0 0 61.5 49" preserveAspectRatio="none"><g fill="none" stroke="#86bde9" stroke-width="5.6" stroke-linecap="round" stroke-linejoin="round"><path d="M31 43.5H5.5a2.8 2.8 0 0 1-2.8-2.8V5.5a2.8 2.8 0 0 1 2.8-2.8H56a2.8 2.8 0 0 1 2.8 2.8V24"/><path d="M12.5 11H23.5M18 11V34M12.5 34H23.5" stroke-width="5"/><path d="M48.5 26V46.5M38.5 36.5H58.5"/></g></svg><div class="t" style="left:1871.00px;top:458.82px;font-size:46.51px;color:#86bde9;transform:scaleX(0.9404);transform-origin:0 0;">Add Fields</div><svg class="a" style="left:1780.5px;top:562.5px;width:55.00px;height:55.00px;overflow:visible;" viewBox="0 0 55 55" preserveAspectRatio="none"><g fill="none" stroke="#0a77d0" stroke-width="5.6" stroke-linecap="round" stroke-linejoin="round"><path d="M30 52H6.5a3.5 3.5 0 0 1-3.5-3.5V6.5A3.5 3.5 0 0 1 6.5 3H48.5A3.5 3.5 0 0 1 52 6.5V32"/><path d="M15 16.5H33M24 16.5V36"/><path d="M44.5 35.5V52.5M36 44H53"/></g></svg><div class="t" style="left:1869.71px;top:588.45px;font-size:45.42px;color:#0a77d0;transform:scaleX(1.0099);transform-origin:0 0;">Make Template</div><svg class="a" style="left:1774.5px;top:694.5px;width:67.00px;height:47.50px;overflow:visible;" viewBox="0 0 67 47.5" preserveAspectRatio="none"><g fill="none" stroke="#86bde9" stroke-width="5.6" stroke-linejoin="round"><rect x="2.8" y="2.8" width="61.4" height="41.9" rx="3"/><path d="M4 5L33.5 28L63 5"/></g></svg><div class="t" style="left:1869.57px;top:716.49px;font-size:44.04px;color:#86bde9;transform:scaleX(0.9812);transform-origin:0 0;">Email a Copy</div><div class="t" style="left:1869.75px;top:844.83px;font-size:45.06px;color:#86bde9;">Create Invite Link</div><div class="t" style="left:1856.78px;top:329.83px;font-size:45.06px;color:#0a77d0;transform:scaleX(0.8584);transform-origin:0 0;">Edit Document</div></div></div><div class="a" style="left:1721.25px;top:332.5px;width:521.0px;height:521.0px;border-radius:50%;border:10.5px solid #5294fb;box-sizing:border-box"></div>
</body></html>
